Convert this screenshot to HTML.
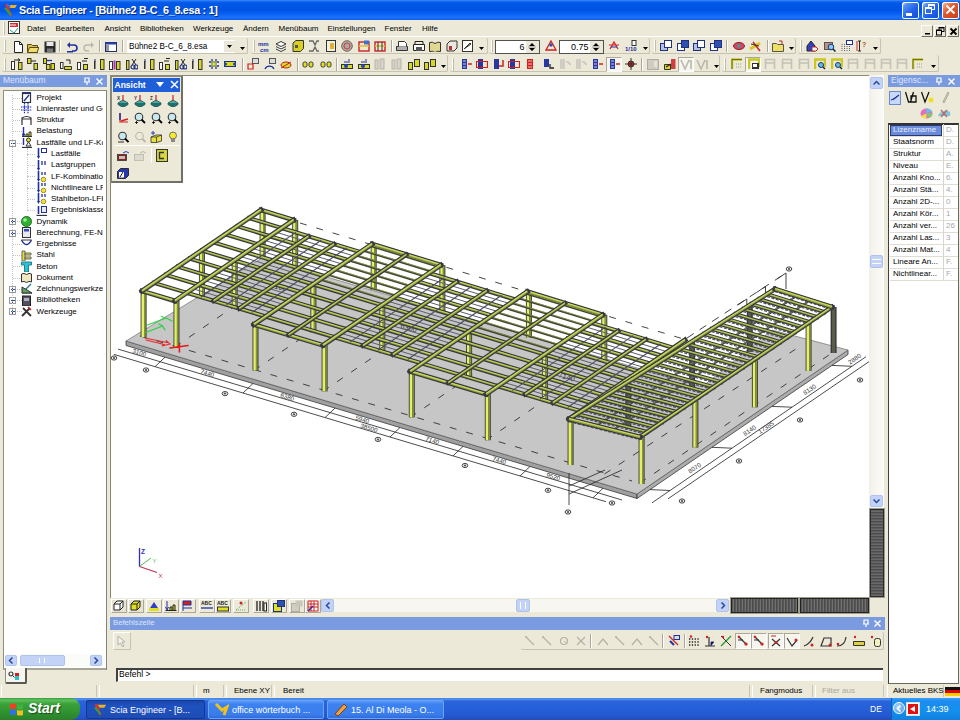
<!DOCTYPE html>
<html><head><meta charset="utf-8">
<style>
*{margin:0;padding:0;box-sizing:border-box}
html,body{width:960px;height:720px;overflow:hidden;background:#ECE9D8;font-family:"Liberation Sans",sans-serif;color:#000;position:relative}
.a{position:absolute}
.t{white-space:nowrap;line-height:1}
</style></head><body>
<div class="a" style="left:0px;top:0px;width:960px;height:20px;background:linear-gradient(#3A8DF9 0,#1868F2 1.5px,#0058E6 3px,#0054E3 10px,#0862F5 14px,#1A70F8 17px,#166AF4 19px,#0C58E0 20px)"></div>
<svg class="a" style="left:4px;top:3px" width="14" height="14" viewBox="0 0 14 14"><path d="M2,1l5,12" stroke="#E83020" stroke-width="2.5"/><path d="M4,2h9l-2,3h-5" fill="#F0B020"/><path d="M1,5l6,7" stroke="#30A040" stroke-width="2"/><path d="M3,1l3,3" stroke="#3070F0" stroke-width="2"/></svg>
<div class="a t" style="left:19px;top:4.5px;color:#fff;font-weight:bold;font-size:10.8px;letter-spacing:-0.3px;text-shadow:1px 1px 0 #0A2880">Scia Engineer - [Bühne2 B-C_6_8.esa : 1]</div>
<div class="a" style="left:902px;top:2px;width:17px;height:17px;background:linear-gradient(135deg,#C8DCFF 0,#5090F8 15%,#2060E8 60%,#1850D0 100%);border:1px solid #fff;border-radius:2px"></div>
<div class="a" style="left:906px;top:13px;width:6px;height:2.5px;background:#fff"></div>
<div class="a" style="left:922px;top:2px;width:17px;height:17px;background:linear-gradient(135deg,#C8DCFF 0,#5090F8 15%,#2060E8 60%,#1850D0 100%);border:1px solid #fff;border-radius:2px"></div>
<div class="a" style="left:928px;top:4px;width:7px;height:6px;border:1px solid #fff;border-top-width:2px"></div>
<div class="a" style="left:925px;top:7px;width:7px;height:7px;border:1px solid #fff;border-top-width:2px;background:#2E6AEE"></div>
<div class="a" style="left:942px;top:2px;width:17px;height:17px;background:linear-gradient(135deg,#FFF 0,#F0A080 8%,#E05830 40%,#C84018 100%);border:1px solid #fff;border-radius:2px"></div>
<svg class="a" style="left:945px;top:4px" width="11" height="11" viewBox="0 0 11 11"><path d="M1.5,1.5l8,8M9.5,1.5l-8,8" stroke="#fff" stroke-width="2"/></svg>
<div class="a" style="left:0px;top:20px;width:960px;height:17px;background:#ECE9D8;border-bottom:1px solid #fff"></div>
<div class="a" style="left:3px;top:22px;width:2px;height:13px;border-left:1px solid #fff;border-right:1px solid #C0BDA8;"></div>
<svg class="a" style="left:8px;top:21px" width="12" height="13" viewBox="0 0 12 13"><rect x="0.5" y="0.5" width="11" height="12" fill="#fff" stroke="#333"/><path d="M2,2h8v4h-8z" fill="#D03030"/><path d="M3,3v2M5,3v2M7,3v2" stroke="#fff"/><path d="M2,9l4,3l4-5" stroke="#20A080" fill="none"/></svg>
<div class="a t" style="left:27px;top:25px;font-size:8px;color:#000">Datei</div>
<div class="a t" style="left:55.5px;top:25px;font-size:8px;color:#000">Bearbeiten</div>
<div class="a t" style="left:104.5px;top:25px;font-size:8px;color:#000">Ansicht</div>
<div class="a t" style="left:140px;top:25px;font-size:8px;color:#000">Bibliotheken</div>
<div class="a t" style="left:193px;top:25px;font-size:8px;color:#000">Werkzeuge</div>
<div class="a t" style="left:243px;top:25px;font-size:8px;color:#000">Ändern</div>
<div class="a t" style="left:278.5px;top:25px;font-size:8px;color:#000">Menübaum</div>
<div class="a t" style="left:327.5px;top:25px;font-size:8px;color:#000">Einstellungen</div>
<div class="a t" style="left:384.5px;top:25px;font-size:8px;color:#000">Fenster</div>
<div class="a t" style="left:422px;top:25px;font-size:8px;color:#000">Hilfe</div>
<div class="a" style="left:921px;top:25px;width:12px;height:12px;background:#ECE9D8;border:1px solid;border-color:#fff #716F64 #716F64 #fff"></div>
<div class="a" style="left:934px;top:25px;width:12px;height:12px;background:#ECE9D8;border:1px solid;border-color:#fff #716F64 #716F64 #fff"></div>
<div class="a" style="left:947px;top:25px;width:12px;height:12px;background:#ECE9D8;border:1px solid;border-color:#fff #716F64 #716F64 #fff"></div>
<svg class="a" style="left:924px;top:27px" width="8" height="8" viewBox="0 0 8 8"><rect x="1" y="6" width="5" height="1.5" fill="#000"/></svg>
<svg class="a" style="left:936px;top:27px" width="9" height="9" viewBox="0 0 9 9"><rect x="3" y="0.5" width="5" height="4" fill="none" stroke="#000"/><rect x="0.5" y="3" width="5" height="5" fill="#ECE9D8" stroke="#000"/><path d="M0.5,3.5h5M3,1h5" stroke="#000" stroke-width="1.2"/></svg>
<svg class="a" style="left:949px;top:27px" width="9" height="9" viewBox="0 0 9 9"><path d="M1.5,1.5l6,6M7.5,1.5l-6,6" stroke="#000" stroke-width="1.8"/></svg>
<div class="a" style="left:0px;top:37px;width:960px;height:36px;background:#ECE9D8"></div>
<div class="a" style="left:2px;top:38px;width:246px;height:16px;background:#ECE9D8;border-bottom:1px solid #C6C3B0;border-right:1px solid #C6C3B0;border-radius:2px"></div>
<div class="a" style="left:4px;top:40px;width:2px;height:12px;border-left:1px solid #fff;border-right:1px solid #C0BDA8;"></div>
<svg class="a" style="left:11.5px;top:41px" width="12.0" height="12.0" viewBox="0 0 12 12"><path d="M2.5,0.5h5l3,3v8h-8z" fill="#fff" stroke="#222"/><path d="M7.5,0.5v3h3" fill="none" stroke="#222"/></svg>
<svg class="a" style="left:27px;top:41px" width="12.0" height="12.0" viewBox="0 0 12 12"><path d="M0.5,3.5h4l1,1h5v7h-10z" fill="#D8C050" stroke="#5A4A10"/><path d="M0.5,11.5l2-5h9.5l-2,5z" fill="#F0DC70" stroke="#5A4A10"/></svg>
<svg class="a" style="left:43.5px;top:41px" width="12.0" height="12.0" viewBox="0 0 12 12"><rect x="0.5" y="0.5" width="11" height="11" fill="#2A2A2A"/><rect x="2.5" y="1" width="7" height="4" fill="#E8E8E8"/><rect x="3" y="7.5" width="6" height="4" fill="#7A7A7A"/></svg>
<svg class="a" style="left:66px;top:41px" width="12.0" height="12.0" viewBox="0 0 12 12"><path d="M3,4 h5 a3,3 0 0 1 0,6 h-2" fill="none" stroke="#2030A0" stroke-width="1.6"/><path d="M1,4l3-3v6z" fill="#2030A0"/><rect x="1" y="10" width="6" height="1.5" fill="#2030A0"/></svg>
<svg class="a" style="left:83px;top:41px" width="12.0" height="12.0" viewBox="0 0 12 12"><path d="M9,4 h-5 a3,3 0 0 0 0,6 h2" fill="none" stroke="#B8B8B0" stroke-width="1.4"/><path d="M11,4l-3-3v6z" fill="#B8B8B0"/></svg>
<svg class="a" style="left:105px;top:41px" width="12.0" height="12.0" viewBox="0 0 12 12"><rect x="0.5" y="1.5" width="11" height="9" fill="#fff" stroke="#223070"/><rect x="0.5" y="1.5" width="11" height="2" fill="#2040B0"/><rect x="1" y="4" width="3" height="6" fill="#9098A8"/></svg>
<div class="a" style="left:59px;top:40px;width:2px;height:12px;border-left:1px solid #ACA899;border-right:1px solid #fff;"></div>
<div class="a" style="left:99px;top:40px;width:2px;height:12px;border-left:1px solid #ACA899;border-right:1px solid #fff;"></div>
<div class="a" style="left:121.5px;top:40px;width:2px;height:12px;border-left:1px solid #ACA899;border-right:1px solid #fff;"></div>
<div class="a" style="left:127px;top:40px;width:108px;height:13px;background:#fff;border:1px solid #fff"></div>
<div class="a t" style="left:129px;top:43px;font-size:8.2px">Bühne2 B-C_6_8.esa</div>
<div class="a" style="left:224px;top:41px;width:11px;height:11px;background:#ECE9D8;border:1px solid #E8E6DC"></div>
<svg class="a" style="left:227px;top:45px" width="5" height="3" viewBox="0 0 5 3"><path d="M0,0h5l-2.5,3z" fill="#000"/></svg>
<svg class="a" style="left:240px;top:47px" width="5" height="3" viewBox="0 0 5 3"><path d="M0,0h5l-2.5,3z" fill="#000"/></svg>
<div class="a" style="left:251px;top:38px;width:237px;height:16px;background:#ECE9D8;border-bottom:1px solid #C6C3B0;border-right:1px solid #C6C3B0;border-radius:2px"></div>
<div class="a" style="left:253px;top:40px;width:2px;height:12px;border-left:1px solid #fff;border-right:1px solid #C0BDA8;"></div>
<svg class="a" style="left:257.5px;top:40px" width="12.0" height="12.0" viewBox="0 0 12 12"><text x="0" y="5.5" font-size="6" font-weight="bold" fill="#2030A0" font-family="Liberation Sans">mm</text><text x="2" y="11.5" font-size="6" font-weight="bold" fill="#2030A0" font-family="Liberation Sans">cm</text></svg>
<svg class="a" style="left:275px;top:40px" width="12.0" height="12.0" viewBox="0 0 12 12"><path d="M1,4l5-2.5l5,2.5l-5,2.5z M1,6.5l5,2.5l5-2.5 M1,9l5,2.5l5-2.5" fill="#fff" stroke="#333"/></svg>
<svg class="a" style="left:291.5px;top:40px" width="12.0" height="12.0" viewBox="0 0 12 12"><path d="M1,3l3-2.5h7.5v8l-3,3h-7.5z" fill="#D8D020" stroke="#333"/><path d="M3,5h3v3h-3z" fill="#555"/></svg>
<svg class="a" style="left:308px;top:40px" width="12.0" height="12.0" viewBox="0 0 12 12"><path d="M1,1h4l2,4l2-4h2M1,11h4l2-4l2,4h2" fill="none" stroke="#666" stroke-width="1.3"/></svg>
<svg class="a" style="left:324.5px;top:40px" width="12.0" height="12.0" viewBox="0 0 12 12"><rect x="1.5" y="0.5" width="9" height="11" fill="#F0F0E0" stroke="#333"/><rect x="5" y="3" width="4" height="6" fill="#E0B030"/></svg>
<svg class="a" style="left:341px;top:40px" width="12.0" height="12.0" viewBox="0 0 12 12"><circle cx="6" cy="6" r="5.3" fill="#B0A8A0" stroke="#706860"/><circle cx="6" cy="6" r="3" fill="none" stroke="#D04040"/></svg>
<svg class="a" style="left:357.5px;top:40px" width="12.0" height="12.0" viewBox="0 0 12 12"><rect x="1" y="2" width="10" height="9" fill="none" stroke="#D02020" stroke-width="1.4"/><rect x="6" y="0.5" width="5" height="4" fill="#4070D0"/><path d="M1,6h10" stroke="#E0C020" stroke-width="1.5"/></svg>
<svg class="a" style="left:374px;top:40px" width="12.0" height="12.0" viewBox="0 0 12 12"><rect x="1" y="2" width="10" height="9" fill="none" stroke="#D02020" stroke-width="1.4"/><path d="M1,6h10" stroke="#E0C020" stroke-width="1.5"/><path d="M4,2v9M8,2v9" stroke="#333"/></svg>
<svg class="a" style="left:396px;top:40px" width="12.0" height="12.0" viewBox="0 0 12 12"><path d="M0.5,6.5h11v4h-11z" fill="#B0B0B0" stroke="#333"/><path d="M2.5,6.5v-5h6l2,2v3" fill="#fff" stroke="#333"/></svg>
<svg class="a" style="left:412.5px;top:40px" width="12.0" height="12.0" viewBox="0 0 12 12"><path d="M0.5,4.5h11v6h-11z" fill="#fff" stroke="#222"/><path d="M2,4.5v-3h8v3" fill="none" stroke="#222"/><rect x="3" y="7" width="6" height="4" fill="#555"/></svg>
<svg class="a" style="left:429px;top:40px" width="12.0" height="12.0" viewBox="0 0 12 12"><path d="M0.5,2.5q3-1 5.5,1q2.5-2 5.5-1v9q-3-1-5.5,1q-2.5-2-5.5-1z" fill="#E0D890" stroke="#333"/></svg>
<svg class="a" style="left:446px;top:40px" width="12.0" height="12.0" viewBox="0 0 12 12"><path d="M1,4l3-3h7v7l-3,3h-7z" fill="#E8E8E0" stroke="#333"/><rect x="3" y="6" width="3" height="4" fill="#C03030"/></svg>
<svg class="a" style="left:462px;top:40px" width="12.0" height="12.0" viewBox="0 0 12 12"><rect x="0.5" y="0.5" width="10" height="11" fill="#fff" stroke="#333"/><path d="M2,9l6-6l1,1z" fill="#D8D020" stroke="#333"/></svg>
<div class="a" style="left:391px;top:40px;width:2px;height:12px;border-left:1px solid #ACA899;border-right:1px solid #fff;"></div>
<svg class="a" style="left:479px;top:47px" width="5" height="3" viewBox="0 0 5 3"><path d="M0,0h5l-2.5,3z" fill="#000"/></svg>
<div class="a" style="left:489px;top:38px;width:161px;height:16px;background:#ECE9D8;border-bottom:1px solid #C6C3B0;border-right:1px solid #C6C3B0;border-radius:2px"></div>
<div class="a" style="left:491px;top:40px;width:2px;height:12px;border-left:1px solid #fff;border-right:1px solid #C0BDA8;"></div>
<div class="a" style="left:495px;top:40px;width:45px;height:14px;background:#fff;border:1.5px solid #505050"></div>
<div class="a t" style="left:519.5px;top:42.5px;font-size:9px">6</div>
<div class="a" style="left:526px;top:41px;width:13px;height:12px;background:#ECE9D8"></div>
<svg class="a" style="left:528px;top:42px" width="10" height="10" viewBox="0 0 10 10"><path d="M1,4l3-3l3,3zM1,6l3,3l3-3z" fill="#000"/><path d="M0,5h8" stroke="#999"/></svg>
<svg class="a" style="left:545px;top:40px" width="12.0" height="12.0" viewBox="0 0 12 12"><path d="M6,1l5,9h-10z" fill="none" stroke="#D02020" stroke-width="1.3"/><circle cx="6" cy="5" r="1.8" fill="#3050C0"/></svg>
<div class="a" style="left:559px;top:40px;width:45px;height:14px;background:#fff;border:1.5px solid #505050"></div>
<div class="a t" style="left:571px;top:42.5px;font-size:9px">0.75</div>
<div class="a" style="left:590px;top:41px;width:13px;height:12px;background:#ECE9D8"></div>
<svg class="a" style="left:592px;top:42px" width="10" height="10" viewBox="0 0 10 10"><path d="M1,4l3-3l3,3zM1,6l3,3l3-3z" fill="#000"/><path d="M0,5h8" stroke="#999"/></svg>
<svg class="a" style="left:608px;top:40px" width="12.0" height="12.0" viewBox="0 0 12 12"><path d="M1,5h10M2,9l4-7l4,7" fill="none" stroke="#D02020" stroke-width="1.2"/><path d="M3,7h6" stroke="#2030A0"/></svg>
<svg class="a" style="left:625px;top:40px" width="12.0" height="12.0" viewBox="0 0 12 12"><text x="0" y="11" font-size="6" font-weight="bold" fill="#2030A0" font-family="Liberation Sans">1/10</text><rect x="7" y="0.5" width="4" height="5" fill="#fff" stroke="#333"/></svg>
<svg class="a" style="left:643px;top:47px" width="5" height="3" viewBox="0 0 5 3"><path d="M0,0h5l-2.5,3z" fill="#000"/></svg>
<div class="a" style="left:652px;top:38px;width:144px;height:16px;background:#ECE9D8;border-bottom:1px solid #C6C3B0;border-right:1px solid #C6C3B0;border-radius:2px"></div>
<div class="a" style="left:654px;top:40px;width:2px;height:12px;border-left:1px solid #fff;border-right:1px solid #C0BDA8;"></div>
<svg class="a" style="left:660px;top:40px" width="12.0" height="12.0" viewBox="0 0 12 12"><rect x="0.5" y="3.5" width="7" height="7" fill="#B8C0E0" stroke="#203080"/><rect x="4.5" y="0.5" width="7" height="7" fill="#fff" stroke="#203080"/></svg>
<svg class="a" style="left:677px;top:40px" width="12.0" height="12.0" viewBox="0 0 12 12"><rect x="0.5" y="3.5" width="7" height="7" fill="#fff" stroke="#203080"/><rect x="4.5" y="0.5" width="7" height="7" fill="#3050B0" stroke="#203080"/></svg>
<svg class="a" style="left:693px;top:40px" width="12.0" height="12.0" viewBox="0 0 12 12"><rect x="0.5" y="3.5" width="7" height="7" fill="#B8C0E0" stroke="#203080"/><rect x="4.5" y="0.5" width="7" height="7" fill="#fff" stroke="#203080"/></svg>
<svg class="a" style="left:710px;top:40px" width="12.0" height="12.0" viewBox="0 0 12 12"><rect x="0.5" y="3.5" width="7" height="7" fill="#fff" stroke="#203080"/><rect x="4.5" y="0.5" width="7" height="7" fill="#3050B0" stroke="#203080"/></svg>
<svg class="a" style="left:732.5px;top:40px" width="12.0" height="12.0" viewBox="0 0 12 12"><ellipse cx="6" cy="6" rx="5.5" ry="3.5" fill="#E04060" stroke="#802030"/><circle cx="6" cy="6" r="1.8" fill="#30A0A0"/></svg>
<svg class="a" style="left:749px;top:40px" width="12.0" height="12.0" viewBox="0 0 12 12"><path d="M1,9l10-6" stroke="#D8C820" stroke-width="3"/><path d="M4,2l7,9" stroke="#D02020" stroke-width="1.5"/><path d="M2,4l8,2" stroke="#333"/></svg>
<svg class="a" style="left:772px;top:40px" width="12.0" height="12.0" viewBox="0 0 12 12"><path d="M0.5,3.5h4l1,1h6v7h-11z" fill="#F0E060" stroke="#555"/><path d="M7,1h3v3" stroke="#D02020" fill="none"/></svg>
<div class="a" style="left:726px;top:40px;width:2px;height:12px;border-left:1px solid #ACA899;border-right:1px solid #fff;"></div>
<div class="a" style="left:766.5px;top:40px;width:2px;height:12px;border-left:1px solid #ACA899;border-right:1px solid #fff;"></div>
<svg class="a" style="left:789px;top:47px" width="5" height="3" viewBox="0 0 5 3"><path d="M0,0h5l-2.5,3z" fill="#000"/></svg>
<div class="a" style="left:798px;top:38px;width:83px;height:16px;background:#ECE9D8;border-bottom:1px solid #C6C3B0;border-right:1px solid #C6C3B0;border-radius:2px"></div>
<div class="a" style="left:800px;top:40px;width:2px;height:12px;border-left:1px solid #fff;border-right:1px solid #C0BDA8;"></div>
<svg class="a" style="left:806px;top:40px" width="12.0" height="12.0" viewBox="0 0 12 12"><path d="M1,6l4-5l4,5v5h-8z" fill="#3040C0" stroke="#222"/><path d="M6,7h4l2,2l-2,2h-4z" fill="#fff" stroke="#D02020"/></svg>
<svg class="a" style="left:823.5px;top:40px" width="12.0" height="12.0" viewBox="0 0 12 12"><rect x="0.5" y="2.5" width="8" height="7" fill="#C09080" stroke="#555"/><circle cx="7" cy="7" r="2.8" fill="#80D0F0" stroke="#203080"/><path d="M9,9l2.5,2.5" stroke="#222" stroke-width="1.5"/></svg>
<svg class="a" style="left:840.5px;top:40px" width="12.0" height="12.0" viewBox="0 0 12 12"><path d="M1,4v8M3.5,4v8M6,4v8M8.5,4v8" stroke="#666" stroke-dasharray="1,1"/><rect x="5.5" y="0.5" width="6" height="4" fill="#fff" stroke="#2030A0"/></svg>
<svg class="a" style="left:856px;top:40px" width="12.0" height="12.0" viewBox="0 0 12 12"><path d="M2,1h3M3.5,1v10M2,11h3" stroke="#222"/><path d="M1,1v10" stroke="#D02020"/><text x="6" y="7" font-size="7" font-weight="bold" fill="#A06020" font-family="Liberation Sans">?</text></svg>
<svg class="a" style="left:873px;top:47px" width="5" height="3" viewBox="0 0 5 3"><path d="M0,0h5l-2.5,3z" fill="#000"/></svg>
<div class="a" style="left:2px;top:55px;width:446px;height:16.5px;background:#ECE9D8;border-bottom:1px solid #C6C3B0;border-right:1px solid #C6C3B0;border-radius:2px"></div>
<div class="a" style="left:4px;top:58px;width:2px;height:13px;border-left:1px solid #fff;border-right:1px solid #C0BDA8;"></div>
<svg class="a" style="left:10.8px;top:57.8px" width="12.0" height="12.0" viewBox="0 0 12 12"><rect x="0.5" y="3.5" width="3" height="8" fill="#fff" stroke="#333"/><rect x="7.5" y="4.5" width="3.5" height="7" fill="#D8D820" stroke="#333"/><path d="M3,2h6l-2,-1.5M9,2l-2,1.5" stroke="#222" fill="none"/></svg>
<svg class="a" style="left:26.5px;top:57.8px" width="12.0" height="12.0" viewBox="0 0 12 12"><rect x="0.5" y="0.5" width="3.5" height="5" fill="#D8D820" stroke="#333"/><rect x="7" y="5.5" width="3.5" height="6" fill="#D8D820" stroke="#333"/><path d="M4,3h5" stroke="#222"/></svg>
<svg class="a" style="left:43px;top:57.8px" width="12.0" height="12.0" viewBox="0 0 12 12"><rect x="0.5" y="0.5" width="3" height="5" fill="#D8D820" stroke="#333"/><rect x="3.5" y="6.5" width="3.5" height="5" fill="#D8D820" stroke="#333"/><rect x="8" y="5.5" width="3.5" height="6" fill="#D8D820" stroke="#333"/><path d="M4,2.5h5" stroke="#2030A0" stroke-width="1.3"/></svg>
<svg class="a" style="left:59.5px;top:57.8px" width="12.0" height="12.0" viewBox="0 0 12 12"><rect x="0.5" y="4.5" width="2.5" height="6" fill="#fff" stroke="#333"/><path d="M4.5,8.5h7v3h-7z" fill="#D8D820" stroke="#333"/><path d="M6,2h4v4" stroke="#222" fill="none"/></svg>
<svg class="a" style="left:77px;top:57.8px" width="12.0" height="12.0" viewBox="0 0 12 12"><rect x="0.5" y="4.5" width="3" height="7" fill="#fff" stroke="#333"/><rect x="6.5" y="6.5" width="4" height="5" fill="#D8D820" stroke="#333"/><path d="M7,0.5h4M5,3h5" stroke="#222"/></svg>
<svg class="a" style="left:92.5px;top:57.8px" width="12.0" height="12.0" viewBox="0 0 12 12"><rect x="1" y="3" width="1.5" height="8" fill="#333"/><rect x="7.5" y="1.5" width="3.5" height="10" fill="#D8D820" stroke="#333"/><path d="M2,1v3" stroke="#203080"/></svg>
<svg class="a" style="left:109px;top:57.8px" width="12.0" height="12.0" viewBox="0 0 12 12"><rect x="0.5" y="3.5" width="3" height="8" fill="#fff" stroke="#333"/><rect x="4.5" y="2.5" width="2" height="9" fill="#B030B0"/><rect x="7.5" y="3.5" width="3.5" height="8" fill="#D8D820" stroke="#333"/></svg>
<svg class="a" style="left:126px;top:57.8px" width="12.0" height="12.0" viewBox="0 0 12 12"><rect x="0.5" y="2.5" width="2.5" height="9" fill="#D8D820" stroke="#333"/><circle cx="7" cy="9" r="2" fill="none" stroke="#203080" stroke-width="1.2"/><circle cx="10" cy="9" r="2" fill="none" stroke="#203080" stroke-width="1.2"/><path d="M6,1l4,6M10,1l-4,6" stroke="#222"/></svg>
<svg class="a" style="left:142.5px;top:57.8px" width="12.0" height="12.0" viewBox="0 0 12 12"><rect x="1" y="3" width="1.5" height="8" fill="#333"/><rect x="7.5" y="1.5" width="3.5" height="10" fill="#D8D820" stroke="#333"/><path d="M2,1v3" stroke="#203080"/></svg>
<svg class="a" style="left:158.5px;top:57.8px" width="12.0" height="12.0" viewBox="0 0 12 12"><rect x="0.5" y="4.5" width="3" height="7" fill="#fff" stroke="#333"/><rect x="6.5" y="6.5" width="4" height="5" fill="#D8D820" stroke="#333"/><path d="M7,0.5h4M5,3h5" stroke="#222"/></svg>
<svg class="a" style="left:175px;top:57.8px" width="12.0" height="12.0" viewBox="0 0 12 12"><rect x="0.5" y="2.5" width="2.5" height="9" fill="#D8D820" stroke="#333"/><circle cx="7" cy="9" r="2" fill="none" stroke="#203080" stroke-width="1.2"/><circle cx="10" cy="9" r="2" fill="none" stroke="#203080" stroke-width="1.2"/><path d="M6,1l4,6M10,1l-4,6" stroke="#222"/></svg>
<svg class="a" style="left:191px;top:57.8px" width="12.0" height="12.0" viewBox="0 0 12 12"><rect x="1" y="3" width="1.5" height="8" fill="#333"/><rect x="7.5" y="1.5" width="3.5" height="10" fill="#D8D820" stroke="#333"/><path d="M2,1v3" stroke="#203080"/></svg>
<svg class="a" style="left:208px;top:57.8px" width="12.0" height="12.0" viewBox="0 0 12 12"><path d="M1,4h10M1,8h10M4,1v10M8,1v10" stroke="#2030A0" stroke-width="1.3"/><rect x="3" y="3" width="6" height="6" fill="#D8D820" opacity="0.6"/></svg>
<svg class="a" style="left:224px;top:57.8px" width="12.0" height="12.0" viewBox="0 0 12 12"><rect x="0.5" y="3.5" width="11" height="5" fill="#D8D820" stroke="#203080"/><circle cx="1.5" cy="6" r="1.5" fill="#2040C0"/><circle cx="10.5" cy="6" r="1.5" fill="#2040C0"/></svg>
<svg class="a" style="left:247px;top:57.8px" width="12.0" height="12.0" viewBox="0 0 12 12"><rect x="5.5" y="0.5" width="6" height="5" fill="#ddd" stroke="#555"/><path d="M1,6h5v5h-5z" fill="none" stroke="#D02020" stroke-width="1.2"/></svg>
<svg class="a" style="left:263.5px;top:57.8px" width="12.0" height="12.0" viewBox="0 0 12 12"><rect x="5.5" y="0.5" width="6" height="5" fill="#ddd" stroke="#555"/><path d="M1,11a5,5 0 0 1 9,0" fill="none" stroke="#2030A0" stroke-width="1.3"/></svg>
<svg class="a" style="left:280px;top:57.8px" width="12.0" height="12.0" viewBox="0 0 12 12"><ellipse cx="6" cy="7" rx="5" ry="3" fill="#D8D820" stroke="#C02020"/><path d="M1,10l10-6" stroke="#C02020"/></svg>
<svg class="a" style="left:302px;top:57.8px" width="12.0" height="12.0" viewBox="0 0 12 12"><rect x="1" y="4" width="4" height="5" rx="1.5" fill="#E0E020" stroke="#333"/><rect x="7" y="4" width="4" height="5" rx="1.5" fill="#E0E020" stroke="#333"/></svg>
<svg class="a" style="left:319.5px;top:57.8px" width="12.0" height="12.0" viewBox="0 0 12 12"><rect x="1" y="4" width="4" height="5" rx="1.5" fill="#E0E020" stroke="#333"/><rect x="7" y="4" width="4" height="5" rx="1.5" fill="#E0E020" stroke="#333"/></svg>
<svg class="a" style="left:341px;top:57.8px" width="12.0" height="12.0" viewBox="0 0 12 12"><rect x="0.5" y="6.5" width="11" height="4" fill="#D8D820" stroke="#333"/><circle cx="5" cy="8" r="2" fill="#2040C0"/><path d="M3,4h4M8,1v4" stroke="#2030A0"/></svg>
<svg class="a" style="left:357.5px;top:57.8px" width="12.0" height="12.0" viewBox="0 0 12 12"><rect x="0.5" y="6.5" width="11" height="4" fill="#D8D820" stroke="#333"/><circle cx="5" cy="8" r="2" fill="#2040C0"/><path d="M3,4h4M8,1v4" stroke="#2030A0"/></svg>
<svg class="a" style="left:374px;top:57.8px" width="12.0" height="12.0" viewBox="0 0 12 12"><rect x="1" y="2" width="3" height="9" fill="#D6D4C8" stroke="#B8B6AA"/><rect x="6" y="1" width="4" height="10" fill="#D6D4C8" stroke="#B8B6AA"/></svg>
<svg class="a" style="left:391px;top:57.8px" width="12.0" height="12.0" viewBox="0 0 12 12"><rect x="1" y="2" width="3" height="9" fill="#D6D4C8" stroke="#B8B6AA"/><rect x="6" y="1" width="4" height="10" fill="#D6D4C8" stroke="#B8B6AA"/></svg>
<svg class="a" style="left:407.5px;top:57.8px" width="12.0" height="12.0" viewBox="0 0 12 12"><rect x="0.5" y="4.5" width="4" height="7" fill="#D8D820" stroke="#333"/><rect x="6.5" y="1.5" width="5" height="7" fill="#D8D820" stroke="#333"/></svg>
<svg class="a" style="left:424px;top:57.8px" width="12.0" height="12.0" viewBox="0 0 12 12"><rect x="0.5" y="4.5" width="4" height="7" fill="#D8D820" stroke="#333"/><rect x="6.5" y="1.5" width="5" height="7" fill="#D8D820" stroke="#333"/></svg>
<div class="a" style="left:241.5px;top:58px;width:2px;height:13px;border-left:1px solid #ACA899;border-right:1px solid #fff;"></div>
<div class="a" style="left:296.5px;top:58px;width:2px;height:13px;border-left:1px solid #ACA899;border-right:1px solid #fff;"></div>
<div class="a" style="left:335.5px;top:58px;width:2px;height:13px;border-left:1px solid #ACA899;border-right:1px solid #fff;"></div>
<svg class="a" style="left:441px;top:65px" width="5" height="3" viewBox="0 0 5 3"><path d="M0,0h5l-2.5,3z" fill="#000"/></svg>
<div class="a" style="left:450px;top:55px;width:270px;height:16.5px;background:#ECE9D8;border-bottom:1px solid #C6C3B0;border-right:1px solid #C6C3B0;border-radius:2px"></div>
<div class="a" style="left:452px;top:58px;width:2px;height:13px;border-left:1px solid #fff;border-right:1px solid #C0BDA8;"></div>
<div class="a" style="left:606px;top:57px;width:16px;height:15px;background:#F6F5EE;border:1px solid;border-color:#ACA899 #fff #fff #ACA899"></div>
<div class="a" style="left:678px;top:57px;width:16px;height:15px;background:#F6F5EE;border:1px solid;border-color:#ACA899 #fff #fff #ACA899"></div>
<svg class="a" style="left:461px;top:57.8px" width="12.0" height="12.0" viewBox="0 0 12 12"><path d="M1,1h5v10h-5z" fill="#2838A0"/><path d="M2,3h3M2,6h3M2,9h3" stroke="#D0D0F0"/><path d="M7,6h4" stroke="#D02020" stroke-width="1.5"/></svg>
<svg class="a" style="left:476px;top:57.8px" width="12.0" height="12.0" viewBox="0 0 12 12"><path d="M2,1h5v10h-5z" fill="#2838A0"/><path d="M0.5,3.5h11v6h-11z" fill="none" stroke="#D02020" stroke-width="1.2"/></svg>
<svg class="a" style="left:492.5px;top:57.8px" width="12.0" height="12.0" viewBox="0 0 12 12"><path d="M1,1h5v10h-5z" fill="#2838A0"/><path d="M6,8h4v-6" fill="none" stroke="#D02020" stroke-width="1.5"/></svg>
<svg class="a" style="left:508px;top:57.8px" width="12.0" height="12.0" viewBox="0 0 12 12"><path d="M2,1h5v10h-5z" fill="#2838A0"/><path d="M0.5,3.5h11v6h-11z" fill="none" stroke="#D02020" stroke-width="1.2"/></svg>
<svg class="a" style="left:524px;top:57.8px" width="12.0" height="12.0" viewBox="0 0 12 12"><path d="M3,1h6v10h-6z" fill="#D02020"/><path d="M4,3h4M4,6h4M4,9h4" stroke="#F0C0C0"/></svg>
<svg class="a" style="left:542.5px;top:57.8px" width="12.0" height="12.0" viewBox="0 0 12 12"><path d="M1,1h5v8h-5z" fill="#2838A0"/><path d="M7,6v4h4" fill="none" stroke="#222" stroke-width="1.3"/></svg>
<svg class="a" style="left:558.5px;top:57.8px" width="12.0" height="12.0" viewBox="0 0 12 12"><path d="M1,1h5v10h-5z" fill="#D0CEC2"/><path d="M7,4a3,3 0 0 1 4,3" fill="none" stroke="#C0BEB2" stroke-width="1.3"/></svg>
<svg class="a" style="left:575px;top:57.8px" width="12.0" height="12.0" viewBox="0 0 12 12"><path d="M1,1h5v10h-5z" fill="#D0CEC2"/><path d="M7,4a3,3 0 0 1 4,3" fill="none" stroke="#C0BEB2" stroke-width="1.3"/></svg>
<svg class="a" style="left:592px;top:57.8px" width="12.0" height="12.0" viewBox="0 0 12 12"><path d="M1,1h5v10h-5z" fill="#2838A0"/><path d="M2,3h3M2,6h3M2,9h3" stroke="#D0D0F0"/><path d="M7,6h4" stroke="#D02020" stroke-width="1.5"/></svg>
<svg class="a" style="left:609px;top:57.8px" width="12.0" height="12.0" viewBox="0 0 12 12"><path d="M1,1h5v10h-5z" fill="#2838A0"/><path d="M2,3h3M2,6h3M2,9h3" stroke="#D0D0F0"/><path d="M7,6h4" stroke="#D02020" stroke-width="1.5"/></svg>
<svg class="a" style="left:625px;top:57.8px" width="12.0" height="12.0" viewBox="0 0 12 12"><circle cx="6" cy="6" r="3" fill="#D02020" stroke="#333"/><path d="M6,0v12M0,6h12" stroke="#333"/></svg>
<svg class="a" style="left:647px;top:57.8px" width="12.0" height="12.0" viewBox="0 0 12 12"><rect x="0.5" y="1.5" width="11" height="10" fill="#CFCDC2" stroke="#B0AEA2"/><rect x="7" y="3" width="3" height="6" fill="#E6E4DA"/></svg>
<svg class="a" style="left:663.5px;top:57.8px" width="12.0" height="12.0" viewBox="0 0 12 12"><path d="M0.5,6.5h6v5h-6z" fill="#D8D820" stroke="#333"/><rect x="7" y="1" width="4.5" height="10" fill="#D04040"/><path d="M2,9l5-3" stroke="#222" stroke-width="1.3"/></svg>
<svg class="a" style="left:680px;top:57.8px" width="12.0" height="12.0" viewBox="0 0 12 12"><path d="M1,2l4,9l4-9M9,3h2v8" fill="none" stroke="#BAB8AC" stroke-width="1.6"/></svg>
<svg class="a" style="left:696px;top:57.8px" width="12.0" height="12.0" viewBox="0 0 12 12"><path d="M1,2l4,9l4-9M9,3h2v8" fill="none" stroke="#BAB8AC" stroke-width="1.6"/></svg>
<div class="a" style="left:641px;top:58px;width:2px;height:13px;border-left:1px solid #ACA899;border-right:1px solid #fff;"></div>
<svg class="a" style="left:714px;top:65px" width="5" height="3" viewBox="0 0 5 3"><path d="M0,0h5l-2.5,3z" fill="#000"/></svg>
<div class="a" style="left:722px;top:55px;width:217px;height:16.5px;background:#ECE9D8;border-bottom:1px solid #C6C3B0;border-right:1px solid #C6C3B0;border-radius:2px"></div>
<div class="a" style="left:724px;top:58px;width:2px;height:13px;border-left:1px solid #fff;border-right:1px solid #C0BDA8;"></div>
<div class="a" style="left:745px;top:57px;width:16px;height:15px;background:#F6F5EE;border:1px solid;border-color:#ACA899 #fff #fff #ACA899"></div>
<svg class="a" style="left:731px;top:57.8px" width="12.0" height="12.0" viewBox="0 0 12 12"><path d="M1,11V1.5h10" fill="none" stroke="#C8C820" stroke-width="2.5"/><path d="M1,11V1.5h10" fill="none" stroke="#333" stroke-width="0.6"/><path d="M5,6h5M5,9h5" stroke="#999" stroke-dasharray="1,1"/></svg>
<svg class="a" style="left:747.5px;top:57.8px" width="12.0" height="12.0" viewBox="0 0 12 12"><path d="M1,11V1.5h10V9" fill="none" stroke="#C8C820" stroke-width="2.5"/><rect x="4" y="5" width="7" height="6" fill="#333"/><rect x="5" y="6" width="4" height="3" fill="#fff"/></svg>
<svg class="a" style="left:764px;top:57.8px" width="12.0" height="12.0" viewBox="0 0 12 12"><path d="M1.5,11V1.5h9V11M1.5,5h9" fill="none" stroke="#C4C2B6" stroke-width="1.6"/></svg>
<svg class="a" style="left:781px;top:57.8px" width="12.0" height="12.0" viewBox="0 0 12 12"><path d="M1.5,11V1.5h9V11M1.5,5h9" fill="none" stroke="#C4C2B6" stroke-width="1.6"/></svg>
<svg class="a" style="left:797.5px;top:57.8px" width="12.0" height="12.0" viewBox="0 0 12 12"><path d="M1.5,11V1.5h9V11M1.5,5h9" fill="none" stroke="#C4C2B6" stroke-width="1.6"/></svg>
<svg class="a" style="left:814px;top:57.8px" width="12.0" height="12.0" viewBox="0 0 12 12"><path d="M1,11V1.5h10V9" fill="none" stroke="#C8C820" stroke-width="2.5"/><circle cx="7" cy="7" r="2.5" fill="#60C0E0" stroke="#203080"/><path d="M9,9l2,2" stroke="#222" stroke-width="1.5"/></svg>
<svg class="a" style="left:831px;top:57.8px" width="12.0" height="12.0" viewBox="0 0 12 12"><path d="M1,11V1.5h10V9" fill="none" stroke="#C8C820" stroke-width="2.5"/><circle cx="7" cy="7" r="2.5" fill="#60C0E0" stroke="#203080"/><path d="M9,9l2,2" stroke="#222" stroke-width="1.5"/></svg>
<svg class="a" style="left:847px;top:57.8px" width="12.0" height="12.0" viewBox="0 0 12 12"><path d="M1.5,11V1.5h9V11M1.5,5h9" fill="none" stroke="#C4C2B6" stroke-width="1.6"/></svg>
<svg class="a" style="left:863.5px;top:57.8px" width="12.0" height="12.0" viewBox="0 0 12 12"><path d="M1.5,11V1.5h9V11M1.5,5h9" fill="none" stroke="#C4C2B6" stroke-width="1.6"/></svg>
<svg class="a" style="left:880px;top:57.8px" width="12.0" height="12.0" viewBox="0 0 12 12"><path d="M1.5,11V1.5h9V11M1.5,5h9" fill="none" stroke="#C4C2B6" stroke-width="1.6"/></svg>
<svg class="a" style="left:896px;top:57.8px" width="12.0" height="12.0" viewBox="0 0 12 12"><path d="M1.5,11V1.5h9V11M1.5,5h9" fill="none" stroke="#C4C2B6" stroke-width="1.6"/></svg>
<svg class="a" style="left:912px;top:57.8px" width="12.0" height="12.0" viewBox="0 0 12 12"><path d="M1,11V1.5h10" fill="none" stroke="#C8C820" stroke-width="2.5"/><path d="M1,11V1.5h10" fill="none" stroke="#333" stroke-width="0.6"/><path d="M5,6h5M5,9h5" stroke="#999" stroke-dasharray="1,1"/></svg>
<svg class="a" style="left:931px;top:65px" width="5" height="3" viewBox="0 0 5 3"><path d="M0,0h5l-2.5,3z" fill="#000"/></svg>
<div class="a" style="left:0px;top:75px;width:107px;height:12px;background:#7B9BE1"></div>
<div class="a t" style="left:3px;top:76px;font-size:8.5px;color:#DDE6FA">Menübaum</div>
<svg class="a" style="left:83px;top:77px" width="8" height="9" viewBox="0 0 8 9"><path d="M2,1h4v4h-4zM1,5h6M4,5v3" stroke="#fff" fill="none" stroke-width="1.2"/></svg>
<svg class="a" style="left:95px;top:77px" width="9" height="9" viewBox="0 0 9 9"><path d="M1.5,1.5l6,6M7.5,1.5l-6,6" stroke="#fff" stroke-width="1.4"/></svg>
<div class="a" style="left:3px;top:90px;width:104px;height:580px;background:#fff;border:1px solid #8E8E80;border-right:1px solid #858575;border-bottom:2px solid #A8A698"></div>
<div class="a" style="left:12.5px;top:97.5px;width:9px;height:1px;border-top:1px dotted #C4C4C4"></div>
<svg class="a" style="left:21px;top:92.0px" width="11" height="11" viewBox="0 0 11 11"><rect x="1.5" y="1.5" width="8" height="9" fill="#fff" stroke="#333" stroke-width="1.2"/><path d="M3,9l5-6" stroke="#2030A0" stroke-width="1.3"/><path d="M1,0.5h9" stroke="#2030A0"/></svg>
<div class="a t" style="left:36.5px;top:93.7px;font-size:8px;color:#000">Projekt</div>
<div class="a" style="left:12.5px;top:108.76px;width:9px;height:1px;border-top:1px dotted #C4C4C4"></div>
<svg class="a" style="left:21px;top:103.26px" width="11" height="11" viewBox="0 0 11 11"><path d="M0,4h11M0,7h11M3.5,0v11M7,0v11" stroke="#2030C0" stroke-width="1.2" stroke-dasharray="1.5,0.7"/></svg>
<div class="a t" style="left:36.5px;top:104.96000000000001px;font-size:8px;color:#000">Linienraster und Ge</div>
<div class="a" style="left:12.5px;top:120.02px;width:9px;height:1px;border-top:1px dotted #C4C4C4"></div>
<svg class="a" style="left:21px;top:114.52px" width="11" height="11" viewBox="0 0 11 11"><path d="M1,10V3q4.5-3 9,0v7M1,4h9" stroke="#333" fill="none" stroke-width="1.2"/></svg>
<div class="a t" style="left:36.5px;top:116.22px;font-size:8px;color:#000">Struktur</div>
<div class="a" style="left:12.5px;top:131.28px;width:9px;height:1px;border-top:1px dotted #C4C4C4"></div>
<svg class="a" style="left:21px;top:125.78px" width="11" height="11" viewBox="0 0 11 11"><path d="M2.5,1v7" stroke="#2030A0" stroke-width="1.4"/><path d="M1,10.5h10" stroke="#333" stroke-width="1.3"/><path d="M5,10V8h2v2M8,10V6h2v4" stroke="#333" fill="#E0E020"/><circle cx="2.5" cy="8.5" r="1.5" fill="#2030A0"/></svg>
<div class="a t" style="left:36.5px;top:127.48px;font-size:8px;color:#000">Belastung</div>
<div class="a" style="left:12.5px;top:142.54px;width:9px;height:1px;border-top:1px dotted #C4C4C4"></div>
<svg class="a" style="left:21px;top:137.04px" width="11" height="11" viewBox="0 0 11 11"><path d="M2.5,1v7" stroke="#2030A0" stroke-width="1.4"/><path d="M1,10.5h10" stroke="#333" stroke-width="1.3"/><circle cx="7.5" cy="3" r="2" fill="#E0E020" stroke="#333"/><path d="M5,9l2.5-4l2.5,4z" fill="#fff" stroke="#333"/></svg>
<div class="a t" style="left:36.5px;top:138.73999999999998px;font-size:8px;color:#000">Lastfälle und LF-Ko</div>
<div class="a" style="left:9px;top:139.54px;width:7px;height:7px;background:#fff;border:1px solid #9A9A9A"></div>
<div class="a" style="left:10.5px;top:142.54px;width:4px;height:1px;background:#2A4A9A"></div>
<div class="a" style="left:27px;top:153.8px;width:8px;height:1px;border-top:1px dotted #C4C4C4"></div>
<svg class="a" style="left:36px;top:148.3px" width="11" height="11" viewBox="0 0 11 11"><path d="M2.5,0v9" stroke="#2030A0" stroke-width="1.6"/><path d="M1,8l1.5,3l1.5-3" fill="#2030A0"/><rect x="5.5" y="0.5" width="5" height="4" fill="#fff" stroke="#2030A0"/></svg>
<div class="a t" style="left:51px;top:150.0px;font-size:8px;color:#000">Lastfälle</div>
<div class="a" style="left:27px;top:165.06px;width:8px;height:1px;border-top:1px dotted #C4C4C4"></div>
<svg class="a" style="left:36px;top:159.56px" width="11" height="11" viewBox="0 0 11 11"><path d="M2.5,0v9" stroke="#2030A0" stroke-width="1.6"/><path d="M1,8l1.5,3l1.5-3" fill="#2030A0"/><path d="M6,1v4M9,1v4" stroke="#2030A0" stroke-width="1.3"/></svg>
<div class="a t" style="left:51px;top:161.26px;font-size:8px;color:#000">Lastgruppen</div>
<div class="a" style="left:27px;top:176.32px;width:8px;height:1px;border-top:1px dotted #C4C4C4"></div>
<svg class="a" style="left:36px;top:170.82px" width="11" height="11" viewBox="0 0 11 11"><path d="M2.5,0v9" stroke="#2030A0" stroke-width="1.6"/><path d="M1,8l1.5,3l1.5-3" fill="#2030A0"/><path d="M6,1v3M9,1v3" stroke="#2030A0" stroke-width="1.3"/><circle cx="7.5" cy="8.5" r="2.3" fill="#F0E040" stroke="#A09020"/></svg>
<div class="a t" style="left:51px;top:172.51999999999998px;font-size:8px;color:#000">LF-Kombination</div>
<div class="a" style="left:27px;top:187.57999999999998px;width:8px;height:1px;border-top:1px dotted #C4C4C4"></div>
<svg class="a" style="left:36px;top:182.07999999999998px" width="11" height="11" viewBox="0 0 11 11"><path d="M2.5,0v9" stroke="#2030A0" stroke-width="1.6"/><path d="M1,8l1.5,3l1.5-3" fill="#2030A0"/><path d="M6,1v3M9,1v3" stroke="#2030A0" stroke-width="1.3"/><circle cx="7.5" cy="8.5" r="2.3" fill="#F0E040" stroke="#A09020"/></svg>
<div class="a t" style="left:51px;top:183.77999999999997px;font-size:8px;color:#000">Nichtlineare LF</div>
<div class="a" style="left:27px;top:198.84px;width:8px;height:1px;border-top:1px dotted #C4C4C4"></div>
<svg class="a" style="left:36px;top:193.34px" width="11" height="11" viewBox="0 0 11 11"><path d="M2.5,0v9" stroke="#2030A0" stroke-width="1.6"/><path d="M1,8l1.5,3l1.5-3" fill="#2030A0"/><path d="M6,1v3M9,1v3" stroke="#2030A0" stroke-width="1.3"/><circle cx="7.5" cy="8.5" r="2.3" fill="#F0E040" stroke="#A09020"/></svg>
<div class="a t" style="left:51px;top:195.04px;font-size:8px;color:#000">Stahlbeton-LFK</div>
<div class="a" style="left:27px;top:210.1px;width:8px;height:1px;border-top:1px dotted #C4C4C4"></div>
<svg class="a" style="left:36px;top:204.6px" width="11" height="11" viewBox="0 0 11 11"><path d="M2.5,1v8" stroke="#2030A0" stroke-width="1.6"/><path d="M0.5,10.5h11" stroke="#333" stroke-width="1.3"/><rect x="5.5" y="1.5" width="5" height="6" fill="#E8E8F8" stroke="#2030A0"/></svg>
<div class="a t" style="left:51px;top:206.29999999999998px;font-size:8px;color:#000">Ergebnisklasse</div>
<div class="a" style="left:12.5px;top:221.36px;width:9px;height:1px;border-top:1px dotted #C4C4C4"></div>
<svg class="a" style="left:21px;top:215.86px" width="11" height="11" viewBox="0 0 11 11"><circle cx="5.5" cy="5.5" r="5" fill="#30B030" stroke="#207020"/><circle cx="4" cy="4" r="1.8" fill="#A0F0A0"/></svg>
<div class="a t" style="left:36.5px;top:217.56px;font-size:8px;color:#000">Dynamik</div>
<div class="a" style="left:9px;top:218.36px;width:7px;height:7px;background:#fff;border:1px solid #9A9A9A"></div>
<div class="a" style="left:10.5px;top:221.36px;width:4px;height:1px;background:#2A4A9A"></div>
<div class="a" style="left:12px;top:219.86px;width:1px;height:4px;background:#2A4A9A"></div>
<div class="a" style="left:12.5px;top:232.62px;width:9px;height:1px;border-top:1px dotted #C4C4C4"></div>
<svg class="a" style="left:21px;top:227.12px" width="11" height="11" viewBox="0 0 11 11"><rect x="1.5" y="0.5" width="8" height="10" fill="#E8E8F0" stroke="#333"/><rect x="3" y="2" width="5" height="2.5" fill="#3050C0"/></svg>
<div class="a t" style="left:36.5px;top:228.82px;font-size:8px;color:#000">Berechnung, FE-N</div>
<div class="a" style="left:9px;top:229.62px;width:7px;height:7px;background:#fff;border:1px solid #9A9A9A"></div>
<div class="a" style="left:10.5px;top:232.62px;width:4px;height:1px;background:#2A4A9A"></div>
<div class="a" style="left:12px;top:231.12px;width:1px;height:4px;background:#2A4A9A"></div>
<div class="a" style="left:12.5px;top:243.88px;width:9px;height:1px;border-top:1px dotted #C4C4C4"></div>
<svg class="a" style="left:21px;top:238.38px" width="11" height="11" viewBox="0 0 11 11"><path d="M0.5,2q5,9 10,0" stroke="#2030A0" fill="none" stroke-width="1.3"/><path d="M0.5,2h10" stroke="#333"/></svg>
<div class="a t" style="left:36.5px;top:240.07999999999998px;font-size:8px;color:#000">Ergebnisse</div>
<div class="a" style="left:12.5px;top:255.14px;width:9px;height:1px;border-top:1px dotted #C4C4C4"></div>
<svg class="a" style="left:21px;top:249.64px" width="11" height="11" viewBox="0 0 11 11"><path d="M1,1h3v10h-3zM4,3h6v2h-6zM4,7h6v2h-6z" fill="#E0E030" stroke="#666"/></svg>
<div class="a t" style="left:36.5px;top:251.33999999999997px;font-size:8px;color:#000">Stahl</div>
<div class="a" style="left:12.5px;top:266.4px;width:9px;height:1px;border-top:1px dotted #C4C4C4"></div>
<svg class="a" style="left:21px;top:260.9px" width="11" height="11" viewBox="0 0 11 11"><path d="M0.5,1h10v3h-3v7h-4v-7h-3z" fill="#30C0D0" stroke="#208090"/></svg>
<div class="a t" style="left:36.5px;top:262.59999999999997px;font-size:8px;color:#000">Beton</div>
<div class="a" style="left:12.5px;top:277.65999999999997px;width:9px;height:1px;border-top:1px dotted #C4C4C4"></div>
<svg class="a" style="left:21px;top:272.15999999999997px" width="11" height="11" viewBox="0 0 11 11"><path d="M0.5,2q2.5-1.5 5,0.5q2.5-2 5-0.5v8q-2.5-1.5-5,0.5q-2.5-2-5-0.5z" fill="#F0E8C0" stroke="#333"/></svg>
<div class="a t" style="left:36.5px;top:273.85999999999996px;font-size:8px;color:#000">Dokument</div>
<div class="a" style="left:12.5px;top:288.91999999999996px;width:9px;height:1px;border-top:1px dotted #C4C4C4"></div>
<svg class="a" style="left:21px;top:283.41999999999996px" width="11" height="11" viewBox="0 0 11 11"><path d="M1,10l9-9" stroke="#2070A0" stroke-width="1.3"/><path d="M1,10h10l-10-6z" fill="#60A060" stroke="#333"/><path d="M1,11h10" stroke="#333"/></svg>
<div class="a t" style="left:36.5px;top:285.11999999999995px;font-size:8px;color:#000">Zeichnungswerkzeuge</div>
<div class="a" style="left:9px;top:285.91999999999996px;width:7px;height:7px;background:#fff;border:1px solid #9A9A9A"></div>
<div class="a" style="left:10.5px;top:288.91999999999996px;width:4px;height:1px;background:#2A4A9A"></div>
<div class="a" style="left:12px;top:287.41999999999996px;width:1px;height:4px;background:#2A4A9A"></div>
<div class="a" style="left:12.5px;top:300.18px;width:9px;height:1px;border-top:1px dotted #C4C4C4"></div>
<svg class="a" style="left:21px;top:294.68px" width="11" height="11" viewBox="0 0 11 11"><rect x="1.5" y="1" width="8" height="10" fill="#505060" stroke="#222"/><rect x="3" y="3" width="5" height="3" fill="#B0B0C0"/></svg>
<div class="a t" style="left:36.5px;top:296.38px;font-size:8px;color:#000">Bibliotheken</div>
<div class="a" style="left:9px;top:297.18px;width:7px;height:7px;background:#fff;border:1px solid #9A9A9A"></div>
<div class="a" style="left:10.5px;top:300.18px;width:4px;height:1px;background:#2A4A9A"></div>
<div class="a" style="left:12px;top:298.68px;width:1px;height:4px;background:#2A4A9A"></div>
<div class="a" style="left:12.5px;top:311.44px;width:9px;height:1px;border-top:1px dotted #C4C4C4"></div>
<svg class="a" style="left:21px;top:305.94px" width="11" height="11" viewBox="0 0 11 11"><path d="M1,10l8-8M2,2l8,8" stroke="#333" stroke-width="1.8"/><path d="M7,1l3,3" stroke="#D02020" stroke-width="1.5"/></svg>
<div class="a t" style="left:36.5px;top:307.64px;font-size:8px;color:#000">Werkzeuge</div>
<div class="a" style="left:9px;top:308.44px;width:7px;height:7px;background:#fff;border:1px solid #9A9A9A"></div>
<div class="a" style="left:10.5px;top:311.44px;width:4px;height:1px;background:#2A4A9A"></div>
<div class="a" style="left:12px;top:309.94px;width:1px;height:4px;background:#2A4A9A"></div>
<div class="a" style="left:12px;top:95px;width:1px;height:217px;border-left:1px dotted #C4C4C4"></div>
<div class="a" style="left:103px;top:91px;width:3px;height:562px;background:#fff"></div>
<div class="a" style="left:106px;top:90px;width:1px;height:580px;background:#858575"></div>
<div class="a" style="left:27px;top:148px;width:1px;height:62px;border-left:1px dotted #C4C4C4"></div>
<div class="a" style="left:4px;top:91px;width:102px;height:0px;"></div>
<div class="a" style="left:4px;top:654px;width:101px;height:13px;background:#FBFBF8"></div>
<div class="a" style="left:5px;top:655px;width:12px;height:11px;background:#C3D3F8;border:1px solid #B0C4EE;border-radius:2px"></div>
<svg class="a" style="left:8px;top:657px" width="6" height="7" viewBox="0 0 6 7"><path d="M4.5,0.5l-3,3l3,3" stroke="#2A4AA0" stroke-width="1.5" fill="none"/></svg>
<div class="a" style="left:20px;top:655px;width:45px;height:11px;background:#C3D3F8;border:1px solid #AFC2EC;border-radius:2px"></div>
<div class="a" style="left:39px;top:658px;width:6px;height:5px;border-left:1px solid #fff;border-right:1px solid #fff"></div>
<div class="a" style="left:90px;top:655px;width:12px;height:11px;background:#C3D3F8;border:1px solid #B0C4EE;border-radius:2px"></div>
<svg class="a" style="left:93px;top:657px" width="6" height="7" viewBox="0 0 6 7"><path d="M1.5,0.5l3,3l-3,3" stroke="#2A4AA0" stroke-width="1.5" fill="none"/></svg>
<div class="a" style="left:5px;top:668px;width:22px;height:16px;background:#F6F5EF;border:1px solid #8E8E80;border-top:none;border-right:2px solid #5A5A50;border-bottom:2px solid #5A5A50;border-radius:0 0 2px 2px"></div>
<svg class="a" style="left:8px;top:671px" width="12" height="10" viewBox="0 0 12 10"><circle cx="3" cy="3" r="2" fill="none" stroke="#333" stroke-width="1.2"/><path d="M4.5,4.5l2,2" stroke="#333"/><rect x="7" y="2" width="4" height="3" fill="#D02020"/><rect x="7" y="5" width="4" height="4" fill="#30C0D0"/></svg>
<div class="a" style="left:107px;top:75px;width:3px;height:523px;background:#ECE9D8"></div>
<div class="a" style="left:110px;top:75px;width:759px;height:523px;background:#fff"></div>
<div class="a" style="left:110px;top:75px;width:1px;height:523px;background:#858575"></div>
<div class="a" style="left:110px;top:75px;width:774px;height:1px;background:#8A8A78"></div>
<svg class="a" style="left:0;top:0" width="960" height="720"><polygon points="126.0,341.0 637.0,494.0 637.0,498.5 126.0,345.5" fill="#A0A0A0" stroke="#383838" stroke-width="0.8" /><polygon points="637.0,494.0 848.0,350.0 848.0,354.5 637.0,498.5" fill="#ACACAC" stroke="#383838" stroke-width="0.8" /><polygon points="126.0,341.0 637.0,494.0 848.0,350.0 772.0,330.0 702.0,387.0 262.0,258.0" fill="#C6C6C6" stroke="#606060" stroke-width="0.6" /><line x1="140.0" y1="336.0" x2="632.0" y2="481.0" stroke="#303030" stroke-width="0.9" stroke-dasharray="7,10"/><line x1="174.9" y1="346.9" x2="240.2" y2="302.4" stroke="#303030" stroke-width="0.9" stroke-dasharray="7,10"/><line x1="253.9" y1="370.5" x2="318.9" y2="326.3" stroke="#303030" stroke-width="0.9" stroke-dasharray="7,10"/><line x1="323.0" y1="391.3" x2="387.8" y2="347.2" stroke="#303030" stroke-width="0.9" stroke-dasharray="7,10"/><line x1="410.2" y1="417.4" x2="474.6" y2="373.5" stroke="#303030" stroke-width="0.9" stroke-dasharray="7,10"/><line x1="486.2" y1="440.2" x2="550.3" y2="396.5" stroke="#303030" stroke-width="0.9" stroke-dasharray="7,10"/><line x1="300.0" y1="223.0" x2="690.0" y2="341.0" stroke="#303030" stroke-width="0.9" stroke-dasharray="7,10"/><line x1="640.0" y1="483.0" x2="832.0" y2="353.0" stroke="#303030" stroke-width="0.9" stroke-dasharray="7,10"/><line x1="604.5" y1="474.0" x2="803.5" y2="344.0" stroke="#303030" stroke-width="0.9" stroke-dasharray="7,10"/><line x1="687.0" y1="338.0" x2="786.0" y2="273.0" stroke="#303030" stroke-width="0.9" stroke-dasharray="8,7"/><line x1="737.8" y1="305.0" x2="746.8" y2="299.0" stroke="#303030" stroke-width="0.9" /><line x1="746.8" y1="299.0" x2="746.8" y2="305.0" stroke="#303030" stroke-width="0.9" /><line x1="756.5" y1="292.5" x2="765.5" y2="286.5" stroke="#303030" stroke-width="0.9" /><line x1="765.5" y1="286.5" x2="765.5" y2="293.5" stroke="#303030" stroke-width="0.9" /><line x1="777.0" y1="279.0" x2="786.0" y2="273.0" stroke="#303030" stroke-width="0.9" /><line x1="786.0" y1="273.0" x2="786.0" y2="289.0" stroke="#303030" stroke-width="0.9" /><line x1="118.0" y1="349.1" x2="622.0" y2="500.0" stroke="#202020" stroke-width="0.8" /><line x1="114.0" y1="354.4" x2="606.0" y2="501.7" stroke="#202020" stroke-width="0.8" /><line x1="165.0" y1="357.2" x2="155.0" y2="366.7" stroke="#202020" stroke-width="0.8" /><line x1="253.0" y1="383.5" x2="243.0" y2="393.0" stroke="#202020" stroke-width="0.8" /><line x1="335.0" y1="408.1" x2="325.0" y2="417.6" stroke="#202020" stroke-width="0.8" /><line x1="400.0" y1="427.5" x2="390.0" y2="437.0" stroke="#202020" stroke-width="0.8" /><line x1="463.0" y1="446.4" x2="453.0" y2="455.9" stroke="#202020" stroke-width="0.8" /><line x1="530.0" y1="466.5" x2="520.0" y2="476.0" stroke="#202020" stroke-width="0.8" /><line x1="603.0" y1="488.3" x2="593.0" y2="497.8" stroke="#202020" stroke-width="0.8" /><text x="132" y="352.7964" font-size="6.3" fill="#333" font-family="Liberation Sans" transform="rotate(16.7 132 352.7964)">3100</text><text x="200" y="373.1556" font-size="6.3" fill="#333" font-family="Liberation Sans" transform="rotate(16.7 200 373.1556)">7440</text><text x="280" y="397.1076" font-size="6.3" fill="#333" font-family="Liberation Sans" transform="rotate(16.7 280 397.1076)">6380</text><text x="355" y="419.5626" font-size="6.3" fill="#333" font-family="Liberation Sans" transform="rotate(16.7 355 419.5626)">5940</text><text x="425" y="440.5206" font-size="6.3" fill="#333" font-family="Liberation Sans" transform="rotate(16.7 425 440.5206)">7140</text><text x="492" y="460.5804" font-size="6.3" fill="#333" font-family="Liberation Sans" transform="rotate(16.7 492 460.5804)">7440</text><text x="546" y="476.748" font-size="6.3" fill="#333" font-family="Liberation Sans" transform="rotate(16.7 546 476.748)">9520</text><text x="360" y="427.5596" font-size="6.3" fill="#333" font-family="Liberation Sans" transform="rotate(16.7 360 427.5596)">38500</text><line x1="652.0" y1="502.8" x2="866.0" y2="356.7" stroke="#202020" stroke-width="0.8" /><line x1="668.0" y1="498.8" x2="872.0" y2="359.6" stroke="#202020" stroke-width="0.8" /><line x1="650.0" y1="489.6" x2="670.0" y2="490.5" stroke="#202020" stroke-width="0.8" /><line x1="712.0" y1="447.3" x2="732.0" y2="448.2" stroke="#202020" stroke-width="0.8" /><line x1="772.0" y1="406.4" x2="792.0" y2="407.2" stroke="#202020" stroke-width="0.8" /><line x1="832.0" y1="365.4" x2="852.0" y2="366.3" stroke="#202020" stroke-width="0.8" /><text x="690" y="473.8275" font-size="6.3" fill="#333" font-family="Liberation Sans" transform="rotate(-34 690 473.8275)">8070</text><text x="745" y="436.29" font-size="6.3" fill="#333" font-family="Liberation Sans" transform="rotate(-34 745 436.29)">8140</text><text x="805" y="395.34000000000003" font-size="6.3" fill="#333" font-family="Liberation Sans" transform="rotate(-34 805 395.34000000000003)">8130</text><text x="850" y="364.6275" font-size="6.3" fill="#333" font-family="Liberation Sans" transform="rotate(-34 850 364.6275)">2880</text><text x="760" y="434.0525" font-size="6.3" fill="#333" font-family="Liberation Sans" transform="rotate(-34 760 434.0525)">17385</text><ellipse cx="114.0" cy="358.0" rx="2.8" ry="2.1" fill="#fff" stroke="#303030" stroke-width="0.9"/><ellipse cx="114.0" cy="358.0" rx="1.3" ry="1" fill="#555"/><ellipse cx="146.0" cy="370.0" rx="2.8" ry="2.1" fill="#fff" stroke="#303030" stroke-width="0.9"/><ellipse cx="146.0" cy="370.0" rx="1.3" ry="1" fill="#555"/><ellipse cx="225.0" cy="393.6" rx="2.8" ry="2.1" fill="#fff" stroke="#303030" stroke-width="0.9"/><ellipse cx="225.0" cy="393.6" rx="1.3" ry="1" fill="#555"/><ellipse cx="294.0" cy="414.3" rx="2.8" ry="2.1" fill="#fff" stroke="#303030" stroke-width="0.9"/><ellipse cx="294.0" cy="414.3" rx="1.3" ry="1" fill="#555"/><ellipse cx="378.0" cy="439.4" rx="2.8" ry="2.1" fill="#fff" stroke="#303030" stroke-width="0.9"/><ellipse cx="378.0" cy="439.4" rx="1.3" ry="1" fill="#555"/><ellipse cx="465.0" cy="465.5" rx="2.8" ry="2.1" fill="#fff" stroke="#303030" stroke-width="0.9"/><ellipse cx="465.0" cy="465.5" rx="1.3" ry="1" fill="#555"/><ellipse cx="548.0" cy="490.3" rx="2.8" ry="2.1" fill="#fff" stroke="#303030" stroke-width="0.9"/><ellipse cx="548.0" cy="490.3" rx="1.3" ry="1" fill="#555"/><ellipse cx="568.0" cy="512.0" rx="2.8" ry="2.1" fill="#fff" stroke="#303030" stroke-width="0.9"/><ellipse cx="568.0" cy="512.0" rx="1.3" ry="1" fill="#555"/><ellipse cx="612.0" cy="503.0" rx="2.8" ry="2.1" fill="#fff" stroke="#303030" stroke-width="0.9"/><ellipse cx="612.0" cy="503.0" rx="1.3" ry="1" fill="#555"/><ellipse cx="682.0" cy="501.0" rx="2.8" ry="2.1" fill="#fff" stroke="#303030" stroke-width="0.9"/><ellipse cx="682.0" cy="501.0" rx="1.3" ry="1" fill="#555"/><ellipse cx="739.0" cy="461.0" rx="2.8" ry="2.1" fill="#fff" stroke="#303030" stroke-width="0.9"/><ellipse cx="739.0" cy="461.0" rx="1.3" ry="1" fill="#555"/><ellipse cx="800.0" cy="420.0" rx="2.8" ry="2.1" fill="#fff" stroke="#303030" stroke-width="0.9"/><ellipse cx="800.0" cy="420.0" rx="1.3" ry="1" fill="#555"/><ellipse cx="860.0" cy="380.0" rx="2.8" ry="2.1" fill="#fff" stroke="#303030" stroke-width="0.9"/><ellipse cx="860.0" cy="380.0" rx="1.3" ry="1" fill="#555"/><ellipse cx="789.0" cy="269.0" rx="2.8" ry="2.1" fill="#fff" stroke="#303030" stroke-width="0.9"/><ellipse cx="789.0" cy="269.0" rx="1.3" ry="1" fill="#555"/><line x1="569.0" y1="473.0" x2="569.0" y2="505.0" stroke="#202020" stroke-width="0.8" /><line x1="569.0" y1="494.0" x2="622.0" y2="470.0" stroke="#202020" stroke-width="0.8" /><line x1="569.0" y1="486.0" x2="605.0" y2="470.0" stroke="#202020" stroke-width="0.8" /><text x="270" y="287" font-size="7.5" fill="#333" font-family="Liberation Sans" transform="rotate(16 270 287)">3100</text><text x="400" y="328" font-size="7.5" fill="#333" font-family="Liberation Sans" transform="rotate(16 400 328)">6300</text><text x="558" y="377" font-size="7.5" fill="#333" font-family="Liberation Sans" transform="rotate(16 558 377)">7140</text><rect x="259.6" y="210.0" width="6.0" height="46.0" fill="#363A40"/><rect x="260.5" y="210.0" width="2.5" height="46.0" fill="#E4F066"/><rect x="263.0" y="210.0" width="1.7" height="46.0" fill="#8A9636"/><rect x="292.2" y="220.0" width="6.0" height="46.0" fill="#363A40"/><rect x="293.1" y="220.0" width="2.5" height="46.0" fill="#E4F066"/><rect x="295.7" y="220.0" width="1.7" height="46.0" fill="#8A9636"/><rect x="370.7" y="244.1" width="6.0" height="46.0" fill="#363A40"/><rect x="371.6" y="244.1" width="2.5" height="46.0" fill="#E4F066"/><rect x="374.1" y="244.1" width="1.7" height="46.0" fill="#8A9636"/><rect x="439.4" y="265.1" width="6.0" height="46.0" fill="#363A40"/><rect x="440.3" y="265.1" width="2.5" height="46.0" fill="#E4F066"/><rect x="442.8" y="265.1" width="1.7" height="46.0" fill="#8A9636"/><rect x="525.9" y="291.6" width="6.0" height="46.0" fill="#363A40"/><rect x="526.8" y="291.6" width="2.5" height="46.0" fill="#E4F066"/><rect x="529.3" y="291.6" width="1.7" height="46.0" fill="#8A9636"/><rect x="601.3" y="314.8" width="6.0" height="46.0" fill="#363A40"/><rect x="602.2" y="314.8" width="2.5" height="46.0" fill="#E4F066"/><rect x="604.8" y="314.8" width="1.7" height="46.0" fill="#8A9636"/><rect x="198.9" y="251.3" width="6.0" height="46.0" fill="#363A40"/><rect x="199.8" y="251.3" width="2.5" height="46.0" fill="#E4F066"/><rect x="202.3" y="251.3" width="1.7" height="46.0" fill="#8A9636"/><rect x="231.7" y="261.2" width="6.0" height="46.0" fill="#363A40"/><rect x="232.6" y="261.2" width="2.5" height="46.0" fill="#E4F066"/><rect x="235.1" y="261.2" width="1.7" height="46.0" fill="#8A9636"/><rect x="310.4" y="285.1" width="6.0" height="46.0" fill="#363A40"/><rect x="311.3" y="285.1" width="2.5" height="46.0" fill="#E4F066"/><rect x="313.8" y="285.1" width="1.7" height="46.0" fill="#8A9636"/><rect x="379.3" y="306.0" width="6.0" height="46.0" fill="#363A40"/><rect x="380.2" y="306.0" width="2.5" height="46.0" fill="#E4F066"/><rect x="382.8" y="306.0" width="1.7" height="46.0" fill="#8A9636"/><rect x="466.1" y="332.3" width="6.0" height="46.0" fill="#363A40"/><rect x="467.0" y="332.3" width="2.5" height="46.0" fill="#E4F066"/><rect x="469.6" y="332.3" width="1.7" height="46.0" fill="#8A9636"/><rect x="541.9" y="355.3" width="6.0" height="46.0" fill="#363A40"/><rect x="542.8" y="355.3" width="2.5" height="46.0" fill="#E4F066"/><rect x="545.3" y="355.3" width="1.7" height="46.0" fill="#8A9636"/><rect x="140.6" y="291.0" width="6.0" height="46.0" fill="#363A40"/><rect x="141.5" y="291.0" width="2.5" height="46.0" fill="#E4F066"/><rect x="144.0" y="291.0" width="1.7" height="46.0" fill="#8A9636"/><rect x="173.5" y="300.9" width="6.0" height="46.0" fill="#363A40"/><rect x="174.4" y="300.9" width="2.5" height="46.0" fill="#E4F066"/><rect x="176.9" y="300.9" width="1.7" height="46.0" fill="#8A9636"/><rect x="252.5" y="324.5" width="6.0" height="46.0" fill="#363A40"/><rect x="253.4" y="324.5" width="2.5" height="46.0" fill="#E4F066"/><rect x="255.9" y="324.5" width="1.7" height="46.0" fill="#8A9636"/><rect x="321.6" y="345.3" width="6.0" height="46.0" fill="#363A40"/><rect x="322.5" y="345.3" width="2.5" height="46.0" fill="#E4F066"/><rect x="325.1" y="345.3" width="1.7" height="46.0" fill="#8A9636"/><rect x="408.8" y="371.4" width="6.0" height="46.0" fill="#363A40"/><rect x="409.7" y="371.4" width="2.5" height="46.0" fill="#E4F066"/><rect x="412.2" y="371.4" width="1.7" height="46.0" fill="#8A9636"/><rect x="484.8" y="394.2" width="6.0" height="46.0" fill="#363A40"/><rect x="485.7" y="394.2" width="2.5" height="46.0" fill="#E4F066"/><rect x="488.2" y="394.2" width="1.7" height="46.0" fill="#8A9636"/><rect x="625.3" y="382.6" width="6.0" height="46.0" fill="#363A40"/><rect x="626.7" y="382.6" width="3.2" height="46.0" fill="#5A5E48"/><rect x="689.1" y="342.3" width="6.0" height="46.0" fill="#363A40"/><rect x="690.5" y="342.3" width="3.2" height="46.0" fill="#5A5E48"/><rect x="746.8" y="305.9" width="6.0" height="46.0" fill="#363A40"/><rect x="748.2" y="305.9" width="3.2" height="46.0" fill="#5A5E48"/><rect x="830.6" y="307.0" width="6.0" height="46.0" fill="#363A40"/><rect x="832.0" y="307.0" width="3.2" height="46.0" fill="#5A5E48"/><rect x="567.6" y="419.0" width="6.0" height="46.0" fill="#363A40"/><rect x="568.5" y="419.0" width="2.5" height="46.0" fill="#E4F066"/><rect x="571.0" y="419.0" width="1.7" height="46.0" fill="#8A9636"/><rect x="638.6" y="437.0" width="6.0" height="47.0" fill="#363A40"/><rect x="639.5" y="437.0" width="2.5" height="47.0" fill="#E4F066"/><rect x="642.0" y="437.0" width="1.7" height="47.0" fill="#8A9636"/><rect x="692.4" y="400.6" width="6.0" height="47.0" fill="#363A40"/><rect x="693.3" y="400.6" width="2.5" height="47.0" fill="#E4F066"/><rect x="695.8" y="400.6" width="1.7" height="47.0" fill="#8A9636"/><rect x="751.9" y="360.3" width="6.0" height="47.0" fill="#363A40"/><rect x="752.8" y="360.3" width="2.5" height="47.0" fill="#E4F066"/><rect x="755.3" y="360.3" width="1.7" height="47.0" fill="#8A9636"/><rect x="805.6" y="323.9" width="6.0" height="47.0" fill="#363A40"/><rect x="806.5" y="323.9" width="2.5" height="47.0" fill="#E4F066"/><rect x="809.1" y="323.9" width="1.7" height="47.0" fill="#8A9636"/><line x1="192.7" y1="288.7" x2="271.6" y2="312.5" stroke="#5A5D6C" stroke-width="1.0" /><line x1="204.6" y1="280.6" x2="283.4" y2="304.4" stroke="#5A5D6C" stroke-width="1.0" /><line x1="216.4" y1="272.6" x2="295.2" y2="296.4" stroke="#5A5D6C" stroke-width="1.0" /><line x1="228.3" y1="264.5" x2="307.1" y2="288.3" stroke="#5A5D6C" stroke-width="1.0" /><line x1="240.2" y1="256.4" x2="318.9" y2="280.3" stroke="#5A5D6C" stroke-width="1.0" /><line x1="252.1" y1="248.3" x2="330.7" y2="272.2" stroke="#5A5D6C" stroke-width="1.0" /><line x1="264.0" y1="240.2" x2="342.5" y2="264.2" stroke="#5A5D6C" stroke-width="1.0" /><line x1="275.8" y1="232.1" x2="354.4" y2="256.1" stroke="#5A5D6C" stroke-width="1.0" /><line x1="340.7" y1="333.2" x2="427.7" y2="359.4" stroke="#5A5D6C" stroke-width="1.0" /><line x1="352.5" y1="325.2" x2="439.4" y2="351.4" stroke="#5A5D6C" stroke-width="1.0" /><line x1="364.3" y1="317.2" x2="451.1" y2="343.5" stroke="#5A5D6C" stroke-width="1.0" /><line x1="376.0" y1="309.2" x2="462.9" y2="335.5" stroke="#5A5D6C" stroke-width="1.0" /><line x1="387.8" y1="301.2" x2="474.6" y2="327.5" stroke="#5A5D6C" stroke-width="1.0" /><line x1="399.6" y1="293.2" x2="486.3" y2="319.6" stroke="#5A5D6C" stroke-width="1.0" /><line x1="411.3" y1="285.2" x2="498.0" y2="311.6" stroke="#5A5D6C" stroke-width="1.0" /><line x1="423.1" y1="277.1" x2="509.7" y2="303.6" stroke="#5A5D6C" stroke-width="1.0" /><line x1="503.6" y1="382.3" x2="586.4" y2="407.1" stroke="#5A5D6C" stroke-width="1.0" /><line x1="515.3" y1="374.3" x2="598.0" y2="399.2" stroke="#5A5D6C" stroke-width="1.0" /><line x1="527.0" y1="366.4" x2="609.6" y2="391.4" stroke="#5A5D6C" stroke-width="1.0" /><line x1="538.6" y1="358.4" x2="621.2" y2="383.4" stroke="#5A5D6C" stroke-width="1.0" /><line x1="550.3" y1="350.5" x2="632.8" y2="375.6" stroke="#5A5D6C" stroke-width="1.0" /><line x1="561.9" y1="342.6" x2="644.4" y2="367.6" stroke="#5A5D6C" stroke-width="1.0" /><line x1="573.6" y1="334.6" x2="656.0" y2="359.8" stroke="#5A5D6C" stroke-width="1.0" /><line x1="585.3" y1="326.7" x2="667.6" y2="351.9" stroke="#5A5D6C" stroke-width="1.0" /><line x1="186.8" y1="292.8" x2="265.7" y2="316.5" stroke="#363A40" stroke-width="4.3" stroke-linecap="square"/><line x1="186.8" y1="292.8" x2="265.7" y2="316.5" stroke="#94A23C" stroke-width="1.8" /><line x1="186.8" y1="292.4" x2="265.7" y2="316.1" stroke="#CEDB62" stroke-width="0.9" /><line x1="198.6" y1="284.7" x2="277.5" y2="308.4" stroke="#363A40" stroke-width="4.3" stroke-linecap="square"/><line x1="198.6" y1="284.7" x2="277.5" y2="308.4" stroke="#94A23C" stroke-width="1.8" /><line x1="198.6" y1="284.3" x2="277.5" y2="308.0" stroke="#CEDB62" stroke-width="0.9" /><line x1="210.5" y1="276.6" x2="289.3" y2="300.4" stroke="#363A40" stroke-width="4.3" stroke-linecap="square"/><line x1="210.5" y1="276.6" x2="289.3" y2="300.4" stroke="#94A23C" stroke-width="1.8" /><line x1="210.5" y1="276.2" x2="289.3" y2="300.0" stroke="#CEDB62" stroke-width="0.9" /><line x1="222.4" y1="268.5" x2="301.2" y2="292.3" stroke="#363A40" stroke-width="4.3" stroke-linecap="square"/><line x1="222.4" y1="268.5" x2="301.2" y2="292.3" stroke="#94A23C" stroke-width="1.8" /><line x1="222.4" y1="268.1" x2="301.2" y2="291.9" stroke="#CEDB62" stroke-width="0.9" /><line x1="234.3" y1="260.4" x2="313.0" y2="284.3" stroke="#363A40" stroke-width="4.3" stroke-linecap="square"/><line x1="234.3" y1="260.4" x2="313.0" y2="284.3" stroke="#94A23C" stroke-width="1.8" /><line x1="234.3" y1="260.0" x2="313.0" y2="283.9" stroke="#CEDB62" stroke-width="0.9" /><line x1="246.1" y1="252.3" x2="324.8" y2="276.3" stroke="#363A40" stroke-width="4.3" stroke-linecap="square"/><line x1="246.1" y1="252.3" x2="324.8" y2="276.3" stroke="#94A23C" stroke-width="1.8" /><line x1="246.1" y1="252.0" x2="324.8" y2="275.9" stroke="#CEDB62" stroke-width="0.9" /><line x1="258.0" y1="244.3" x2="336.6" y2="268.2" stroke="#363A40" stroke-width="4.3" stroke-linecap="square"/><line x1="258.0" y1="244.3" x2="336.6" y2="268.2" stroke="#94A23C" stroke-width="1.8" /><line x1="258.0" y1="243.9" x2="336.6" y2="267.8" stroke="#CEDB62" stroke-width="0.9" /><line x1="269.9" y1="236.2" x2="348.4" y2="260.2" stroke="#363A40" stroke-width="4.3" stroke-linecap="square"/><line x1="269.9" y1="236.2" x2="348.4" y2="260.2" stroke="#94A23C" stroke-width="1.8" /><line x1="269.9" y1="235.8" x2="348.4" y2="259.8" stroke="#CEDB62" stroke-width="0.9" /><line x1="281.8" y1="228.1" x2="360.3" y2="252.1" stroke="#363A40" stroke-width="4.3" stroke-linecap="square"/><line x1="281.8" y1="228.1" x2="360.3" y2="252.1" stroke="#94A23C" stroke-width="1.8" /><line x1="281.8" y1="227.7" x2="360.3" y2="251.7" stroke="#CEDB62" stroke-width="0.9" /><line x1="334.8" y1="337.3" x2="421.9" y2="363.4" stroke="#363A40" stroke-width="4.3" stroke-linecap="square"/><line x1="334.8" y1="337.3" x2="421.9" y2="363.4" stroke="#94A23C" stroke-width="1.8" /><line x1="334.8" y1="336.9" x2="421.9" y2="363.0" stroke="#CEDB62" stroke-width="0.9" /><line x1="346.6" y1="329.2" x2="433.6" y2="355.4" stroke="#363A40" stroke-width="4.3" stroke-linecap="square"/><line x1="346.6" y1="329.2" x2="433.6" y2="355.4" stroke="#94A23C" stroke-width="1.8" /><line x1="346.6" y1="328.8" x2="433.6" y2="355.0" stroke="#CEDB62" stroke-width="0.9" /><line x1="358.4" y1="321.2" x2="445.3" y2="347.5" stroke="#363A40" stroke-width="4.3" stroke-linecap="square"/><line x1="358.4" y1="321.2" x2="445.3" y2="347.5" stroke="#94A23C" stroke-width="1.8" /><line x1="358.4" y1="320.8" x2="445.3" y2="347.1" stroke="#CEDB62" stroke-width="0.9" /><line x1="370.1" y1="313.2" x2="457.0" y2="339.5" stroke="#363A40" stroke-width="4.3" stroke-linecap="square"/><line x1="370.1" y1="313.2" x2="457.0" y2="339.5" stroke="#94A23C" stroke-width="1.8" /><line x1="370.1" y1="312.8" x2="457.0" y2="339.1" stroke="#CEDB62" stroke-width="0.9" /><line x1="381.9" y1="305.2" x2="468.7" y2="331.5" stroke="#363A40" stroke-width="4.3" stroke-linecap="square"/><line x1="381.9" y1="305.2" x2="468.7" y2="331.5" stroke="#94A23C" stroke-width="1.8" /><line x1="381.9" y1="304.8" x2="468.7" y2="331.1" stroke="#CEDB62" stroke-width="0.9" /><line x1="393.7" y1="297.2" x2="480.4" y2="323.5" stroke="#363A40" stroke-width="4.3" stroke-linecap="square"/><line x1="393.7" y1="297.2" x2="480.4" y2="323.5" stroke="#94A23C" stroke-width="1.8" /><line x1="393.7" y1="296.8" x2="480.4" y2="323.1" stroke="#CEDB62" stroke-width="0.9" /><line x1="405.5" y1="289.2" x2="492.1" y2="315.6" stroke="#363A40" stroke-width="4.3" stroke-linecap="square"/><line x1="405.5" y1="289.2" x2="492.1" y2="315.6" stroke="#94A23C" stroke-width="1.8" /><line x1="405.5" y1="288.8" x2="492.1" y2="315.2" stroke="#CEDB62" stroke-width="0.9" /><line x1="417.2" y1="281.2" x2="503.8" y2="307.6" stroke="#363A40" stroke-width="4.3" stroke-linecap="square"/><line x1="417.2" y1="281.2" x2="503.8" y2="307.6" stroke="#94A23C" stroke-width="1.8" /><line x1="417.2" y1="280.8" x2="503.8" y2="307.2" stroke="#CEDB62" stroke-width="0.9" /><line x1="429.0" y1="273.1" x2="515.6" y2="299.6" stroke="#363A40" stroke-width="4.3" stroke-linecap="square"/><line x1="429.0" y1="273.1" x2="515.6" y2="299.6" stroke="#94A23C" stroke-width="1.8" /><line x1="429.0" y1="272.7" x2="515.6" y2="299.2" stroke="#CEDB62" stroke-width="0.9" /><line x1="497.8" y1="386.2" x2="580.6" y2="411.1" stroke="#363A40" stroke-width="4.3" stroke-linecap="square"/><line x1="497.8" y1="386.2" x2="580.6" y2="411.1" stroke="#94A23C" stroke-width="1.8" /><line x1="497.8" y1="385.8" x2="580.6" y2="410.7" stroke="#CEDB62" stroke-width="0.9" /><line x1="509.5" y1="378.3" x2="592.2" y2="403.2" stroke="#363A40" stroke-width="4.3" stroke-linecap="square"/><line x1="509.5" y1="378.3" x2="592.2" y2="403.2" stroke="#94A23C" stroke-width="1.8" /><line x1="509.5" y1="377.9" x2="592.2" y2="402.8" stroke="#CEDB62" stroke-width="0.9" /><line x1="521.1" y1="370.4" x2="603.8" y2="395.3" stroke="#363A40" stroke-width="4.3" stroke-linecap="square"/><line x1="521.1" y1="370.4" x2="603.8" y2="395.3" stroke="#94A23C" stroke-width="1.8" /><line x1="521.1" y1="370.0" x2="603.8" y2="394.9" stroke="#CEDB62" stroke-width="0.9" /><line x1="532.8" y1="362.4" x2="615.4" y2="387.4" stroke="#363A40" stroke-width="4.3" stroke-linecap="square"/><line x1="532.8" y1="362.4" x2="615.4" y2="387.4" stroke="#94A23C" stroke-width="1.8" /><line x1="532.8" y1="362.0" x2="615.4" y2="387.0" stroke="#CEDB62" stroke-width="0.9" /><line x1="544.5" y1="354.5" x2="627.0" y2="379.5" stroke="#363A40" stroke-width="4.3" stroke-linecap="square"/><line x1="544.5" y1="354.5" x2="627.0" y2="379.5" stroke="#94A23C" stroke-width="1.8" /><line x1="544.5" y1="354.1" x2="627.0" y2="379.1" stroke="#CEDB62" stroke-width="0.9" /><line x1="556.1" y1="346.5" x2="638.6" y2="371.6" stroke="#363A40" stroke-width="4.3" stroke-linecap="square"/><line x1="556.1" y1="346.5" x2="638.6" y2="371.6" stroke="#94A23C" stroke-width="1.8" /><line x1="556.1" y1="346.1" x2="638.6" y2="371.2" stroke="#CEDB62" stroke-width="0.9" /><line x1="567.8" y1="338.6" x2="650.2" y2="363.7" stroke="#363A40" stroke-width="4.3" stroke-linecap="square"/><line x1="567.8" y1="338.6" x2="650.2" y2="363.7" stroke="#94A23C" stroke-width="1.8" /><line x1="567.8" y1="338.2" x2="650.2" y2="363.3" stroke="#CEDB62" stroke-width="0.9" /><line x1="579.4" y1="330.7" x2="661.8" y2="355.8" stroke="#363A40" stroke-width="4.3" stroke-linecap="square"/><line x1="579.4" y1="330.7" x2="661.8" y2="355.8" stroke="#94A23C" stroke-width="1.8" /><line x1="579.4" y1="330.3" x2="661.8" y2="355.4" stroke="#CEDB62" stroke-width="0.9" /><line x1="591.1" y1="322.7" x2="673.4" y2="347.9" stroke="#363A40" stroke-width="4.3" stroke-linecap="square"/><line x1="591.1" y1="322.7" x2="673.4" y2="347.9" stroke="#94A23C" stroke-width="1.8" /><line x1="591.1" y1="322.3" x2="673.4" y2="347.5" stroke="#CEDB62" stroke-width="0.9" /><line x1="142.0" y1="291.0" x2="174.9" y2="300.9" stroke="#363A40" stroke-width="4.8" stroke-linecap="square"/><line x1="142.0" y1="291.0" x2="174.9" y2="300.9" stroke="#94A23C" stroke-width="2.3" /><line x1="142.0" y1="290.5" x2="174.9" y2="300.4" stroke="#CEDB62" stroke-width="1.15" /><line x1="153.9" y1="282.9" x2="186.8" y2="292.8" stroke="#363A40" stroke-width="4.0" stroke-linecap="square"/><line x1="153.9" y1="282.9" x2="186.8" y2="292.8" stroke="#94A23C" stroke-width="1.5" /><line x1="153.9" y1="282.6" x2="186.8" y2="292.4" stroke="#CEDB62" stroke-width="0.75" /><line x1="165.8" y1="274.8" x2="198.6" y2="284.7" stroke="#363A40" stroke-width="4.0" stroke-linecap="square"/><line x1="165.8" y1="274.8" x2="198.6" y2="284.7" stroke="#94A23C" stroke-width="1.5" /><line x1="165.8" y1="274.5" x2="198.6" y2="284.4" stroke="#CEDB62" stroke-width="0.75" /><line x1="177.7" y1="266.7" x2="210.5" y2="276.6" stroke="#363A40" stroke-width="4.0" stroke-linecap="square"/><line x1="177.7" y1="266.7" x2="210.5" y2="276.6" stroke="#94A23C" stroke-width="1.5" /><line x1="177.7" y1="266.4" x2="210.5" y2="276.3" stroke="#CEDB62" stroke-width="0.75" /><line x1="189.6" y1="258.6" x2="222.4" y2="268.5" stroke="#363A40" stroke-width="4.0" stroke-linecap="square"/><line x1="189.6" y1="258.6" x2="222.4" y2="268.5" stroke="#94A23C" stroke-width="1.5" /><line x1="189.6" y1="258.3" x2="222.4" y2="268.2" stroke="#CEDB62" stroke-width="0.75" /><line x1="201.5" y1="250.5" x2="234.3" y2="260.4" stroke="#363A40" stroke-width="4.0" stroke-linecap="square"/><line x1="201.5" y1="250.5" x2="234.3" y2="260.4" stroke="#94A23C" stroke-width="1.5" /><line x1="201.5" y1="250.2" x2="234.3" y2="260.1" stroke="#CEDB62" stroke-width="0.75" /><line x1="213.4" y1="242.4" x2="246.1" y2="252.3" stroke="#363A40" stroke-width="4.0" stroke-linecap="square"/><line x1="213.4" y1="242.4" x2="246.1" y2="252.3" stroke="#94A23C" stroke-width="1.5" /><line x1="213.4" y1="242.1" x2="246.1" y2="252.0" stroke="#CEDB62" stroke-width="0.75" /><line x1="225.3" y1="234.3" x2="258.0" y2="244.3" stroke="#363A40" stroke-width="4.0" stroke-linecap="square"/><line x1="225.3" y1="234.3" x2="258.0" y2="244.3" stroke="#94A23C" stroke-width="1.5" /><line x1="225.3" y1="234.0" x2="258.0" y2="243.9" stroke="#CEDB62" stroke-width="0.75" /><line x1="237.2" y1="226.2" x2="269.9" y2="236.2" stroke="#363A40" stroke-width="4.0" stroke-linecap="square"/><line x1="237.2" y1="226.2" x2="269.9" y2="236.2" stroke="#94A23C" stroke-width="1.5" /><line x1="237.2" y1="225.9" x2="269.9" y2="235.8" stroke="#CEDB62" stroke-width="0.75" /><line x1="249.1" y1="218.1" x2="281.8" y2="228.1" stroke="#363A40" stroke-width="4.0" stroke-linecap="square"/><line x1="249.1" y1="218.1" x2="281.8" y2="228.1" stroke="#94A23C" stroke-width="1.5" /><line x1="249.1" y1="217.8" x2="281.8" y2="227.8" stroke="#CEDB62" stroke-width="0.75" /><line x1="261.0" y1="210.0" x2="293.6" y2="220.0" stroke="#363A40" stroke-width="4.8" stroke-linecap="square"/><line x1="261.0" y1="210.0" x2="293.6" y2="220.0" stroke="#94A23C" stroke-width="2.3" /><line x1="261.0" y1="209.5" x2="293.6" y2="219.5" stroke="#CEDB62" stroke-width="1.15" /><line x1="253.9" y1="324.5" x2="323.0" y2="345.3" stroke="#363A40" stroke-width="4.8" stroke-linecap="square"/><line x1="253.9" y1="324.5" x2="323.0" y2="345.3" stroke="#94A23C" stroke-width="2.3" /><line x1="253.9" y1="324.0" x2="323.0" y2="344.8" stroke="#CEDB62" stroke-width="1.15" /><line x1="265.7" y1="316.5" x2="334.8" y2="337.3" stroke="#363A40" stroke-width="4.2" stroke-linecap="square"/><line x1="265.7" y1="316.5" x2="334.8" y2="337.3" stroke="#94A23C" stroke-width="1.7" /><line x1="265.7" y1="316.1" x2="334.8" y2="336.9" stroke="#CEDB62" stroke-width="0.85" /><line x1="277.5" y1="308.4" x2="346.6" y2="329.2" stroke="#363A40" stroke-width="4.2" stroke-linecap="square"/><line x1="277.5" y1="308.4" x2="346.6" y2="329.2" stroke="#94A23C" stroke-width="1.7" /><line x1="277.5" y1="308.1" x2="346.6" y2="328.9" stroke="#CEDB62" stroke-width="0.85" /><line x1="289.3" y1="300.4" x2="358.4" y2="321.2" stroke="#363A40" stroke-width="4.2" stroke-linecap="square"/><line x1="289.3" y1="300.4" x2="358.4" y2="321.2" stroke="#94A23C" stroke-width="1.7" /><line x1="289.3" y1="300.0" x2="358.4" y2="320.9" stroke="#CEDB62" stroke-width="0.85" /><line x1="301.2" y1="292.3" x2="370.1" y2="313.2" stroke="#363A40" stroke-width="4.2" stroke-linecap="square"/><line x1="301.2" y1="292.3" x2="370.1" y2="313.2" stroke="#94A23C" stroke-width="1.7" /><line x1="301.2" y1="292.0" x2="370.1" y2="312.8" stroke="#CEDB62" stroke-width="0.85" /><line x1="313.0" y1="284.3" x2="381.9" y2="305.2" stroke="#363A40" stroke-width="4.2" stroke-linecap="square"/><line x1="313.0" y1="284.3" x2="381.9" y2="305.2" stroke="#94A23C" stroke-width="1.7" /><line x1="313.0" y1="283.9" x2="381.9" y2="304.8" stroke="#CEDB62" stroke-width="0.85" /><line x1="372.1" y1="244.1" x2="440.8" y2="265.1" stroke="#363A40" stroke-width="4.8" stroke-linecap="square"/><line x1="372.1" y1="244.1" x2="440.8" y2="265.1" stroke="#94A23C" stroke-width="2.3" /><line x1="372.1" y1="243.6" x2="440.8" y2="264.6" stroke="#CEDB62" stroke-width="1.15" /><line x1="320.1" y1="279.5" x2="389.0" y2="300.4" stroke="#3E4230" stroke-width="2.0" /><line x1="320.1" y1="278.8" x2="389.0" y2="299.7" stroke="#9AA850" stroke-width="0.7" /><line x1="327.2" y1="274.6" x2="396.0" y2="295.6" stroke="#3E4230" stroke-width="2.0" /><line x1="327.2" y1="273.9" x2="396.0" y2="294.9" stroke="#9AA850" stroke-width="0.7" /><line x1="334.3" y1="269.8" x2="403.1" y2="290.8" stroke="#3E4230" stroke-width="2.0" /><line x1="334.3" y1="269.1" x2="403.1" y2="290.1" stroke="#9AA850" stroke-width="0.7" /><line x1="341.4" y1="265.0" x2="410.2" y2="286.0" stroke="#3E4230" stroke-width="2.0" /><line x1="341.4" y1="264.3" x2="410.2" y2="285.3" stroke="#9AA850" stroke-width="0.7" /><line x1="348.4" y1="260.2" x2="417.2" y2="281.2" stroke="#3E4230" stroke-width="2.0" /><line x1="348.4" y1="259.5" x2="417.2" y2="280.5" stroke="#9AA850" stroke-width="0.7" /><line x1="355.5" y1="255.3" x2="424.3" y2="276.3" stroke="#3E4230" stroke-width="2.0" /><line x1="355.5" y1="254.6" x2="424.3" y2="275.6" stroke="#9AA850" stroke-width="0.7" /><line x1="362.6" y1="250.5" x2="431.4" y2="271.5" stroke="#3E4230" stroke-width="2.0" /><line x1="362.6" y1="249.8" x2="431.4" y2="270.8" stroke="#9AA850" stroke-width="0.7" /><line x1="369.7" y1="245.7" x2="438.4" y2="266.7" stroke="#3E4230" stroke-width="2.0" /><line x1="369.7" y1="245.0" x2="438.4" y2="266.0" stroke="#9AA850" stroke-width="0.7" /><line x1="410.2" y1="371.4" x2="486.2" y2="394.2" stroke="#363A40" stroke-width="4.8" stroke-linecap="square"/><line x1="410.2" y1="371.4" x2="486.2" y2="394.2" stroke="#94A23C" stroke-width="2.3" /><line x1="410.2" y1="370.9" x2="486.2" y2="393.7" stroke="#CEDB62" stroke-width="1.15" /><line x1="421.9" y1="363.4" x2="497.8" y2="386.2" stroke="#363A40" stroke-width="4.2" stroke-linecap="square"/><line x1="421.9" y1="363.4" x2="497.8" y2="386.2" stroke="#94A23C" stroke-width="1.7" /><line x1="421.9" y1="363.0" x2="497.8" y2="385.9" stroke="#CEDB62" stroke-width="0.85" /><line x1="433.6" y1="355.4" x2="509.5" y2="378.3" stroke="#363A40" stroke-width="4.2" stroke-linecap="square"/><line x1="433.6" y1="355.4" x2="509.5" y2="378.3" stroke="#94A23C" stroke-width="1.7" /><line x1="433.6" y1="355.1" x2="509.5" y2="377.9" stroke="#CEDB62" stroke-width="0.85" /><line x1="445.3" y1="347.5" x2="521.1" y2="370.4" stroke="#363A40" stroke-width="4.2" stroke-linecap="square"/><line x1="445.3" y1="347.5" x2="521.1" y2="370.4" stroke="#94A23C" stroke-width="1.7" /><line x1="445.3" y1="347.1" x2="521.1" y2="370.0" stroke="#CEDB62" stroke-width="0.85" /><line x1="457.0" y1="339.5" x2="532.8" y2="362.4" stroke="#363A40" stroke-width="4.2" stroke-linecap="square"/><line x1="457.0" y1="339.5" x2="532.8" y2="362.4" stroke="#94A23C" stroke-width="1.7" /><line x1="457.0" y1="339.1" x2="532.8" y2="362.0" stroke="#CEDB62" stroke-width="0.85" /><line x1="468.7" y1="331.5" x2="544.5" y2="354.5" stroke="#363A40" stroke-width="4.2" stroke-linecap="square"/><line x1="468.7" y1="331.5" x2="544.5" y2="354.5" stroke="#94A23C" stroke-width="1.7" /><line x1="468.7" y1="331.1" x2="544.5" y2="354.1" stroke="#CEDB62" stroke-width="0.85" /><line x1="527.3" y1="291.6" x2="602.7" y2="314.8" stroke="#363A40" stroke-width="4.8" stroke-linecap="square"/><line x1="527.3" y1="291.6" x2="602.7" y2="314.8" stroke="#94A23C" stroke-width="2.3" /><line x1="527.3" y1="291.1" x2="602.7" y2="314.3" stroke="#CEDB62" stroke-width="1.15" /><line x1="475.7" y1="326.7" x2="551.4" y2="349.7" stroke="#3E4230" stroke-width="2.0" /><line x1="475.7" y1="326.0" x2="551.4" y2="349.0" stroke="#9AA850" stroke-width="0.7" /><line x1="482.8" y1="321.9" x2="558.4" y2="344.9" stroke="#3E4230" stroke-width="2.0" /><line x1="482.8" y1="321.2" x2="558.4" y2="344.2" stroke="#9AA850" stroke-width="0.7" /><line x1="489.8" y1="317.2" x2="565.4" y2="340.2" stroke="#3E4230" stroke-width="2.0" /><line x1="489.8" y1="316.5" x2="565.4" y2="339.5" stroke="#9AA850" stroke-width="0.7" /><line x1="496.8" y1="312.4" x2="572.4" y2="335.4" stroke="#3E4230" stroke-width="2.0" /><line x1="496.8" y1="311.7" x2="572.4" y2="334.7" stroke="#9AA850" stroke-width="0.7" /><line x1="503.8" y1="307.6" x2="579.4" y2="330.7" stroke="#3E4230" stroke-width="2.0" /><line x1="503.8" y1="306.9" x2="579.4" y2="330.0" stroke="#9AA850" stroke-width="0.7" /><line x1="510.9" y1="302.8" x2="586.4" y2="325.9" stroke="#3E4230" stroke-width="2.0" /><line x1="510.9" y1="302.1" x2="586.4" y2="325.2" stroke="#9AA850" stroke-width="0.7" /><line x1="517.9" y1="298.0" x2="593.4" y2="321.1" stroke="#3E4230" stroke-width="2.0" /><line x1="517.9" y1="297.3" x2="593.4" y2="320.4" stroke="#9AA850" stroke-width="0.7" /><line x1="524.9" y1="293.2" x2="600.4" y2="316.4" stroke="#3E4230" stroke-width="2.0" /><line x1="524.9" y1="292.5" x2="600.4" y2="315.7" stroke="#9AA850" stroke-width="0.7" /><line x1="200.8" y1="297.0" x2="295.8" y2="232.4" stroke="#4A4D5C" stroke-width="1.1" /><line x1="226.4" y1="304.7" x2="321.2" y2="240.2" stroke="#4A4D5C" stroke-width="1.1" /><line x1="252.0" y1="312.4" x2="346.7" y2="248.0" stroke="#4A4D5C" stroke-width="1.1" /><line x1="350.2" y1="341.9" x2="444.3" y2="277.8" stroke="#4A4D5C" stroke-width="1.1" /><line x1="377.9" y1="350.2" x2="471.9" y2="286.2" stroke="#4A4D5C" stroke-width="1.1" /><line x1="407.8" y1="359.2" x2="501.6" y2="295.3" stroke="#4A4D5C" stroke-width="1.1" /><line x1="512.3" y1="390.6" x2="605.5" y2="327.1" stroke="#4A4D5C" stroke-width="1.1" /><line x1="540.1" y1="398.9" x2="633.1" y2="335.6" stroke="#4A4D5C" stroke-width="1.1" /><line x1="567.8" y1="407.3" x2="660.7" y2="344.0" stroke="#4A4D5C" stroke-width="1.1" /><line x1="213.6" y1="300.8" x2="308.5" y2="236.3" stroke="#363A40" stroke-width="4.5" stroke-linecap="square"/><line x1="213.6" y1="300.8" x2="308.5" y2="236.3" stroke="#94A23C" stroke-width="2.0" /><line x1="213.6" y1="300.4" x2="308.5" y2="235.8" stroke="#CEDB62" stroke-width="1.0" /><line x1="239.2" y1="308.5" x2="334.0" y2="244.1" stroke="#363A40" stroke-width="4.5" stroke-linecap="square"/><line x1="239.2" y1="308.5" x2="334.0" y2="244.1" stroke="#94A23C" stroke-width="2.0" /><line x1="239.2" y1="308.1" x2="334.0" y2="243.6" stroke="#CEDB62" stroke-width="1.0" /><line x1="363.0" y1="345.7" x2="457.0" y2="281.7" stroke="#363A40" stroke-width="4.5" stroke-linecap="square"/><line x1="363.0" y1="345.7" x2="457.0" y2="281.7" stroke="#94A23C" stroke-width="2.0" /><line x1="363.0" y1="345.3" x2="457.0" y2="281.3" stroke="#CEDB62" stroke-width="1.0" /><line x1="392.9" y1="354.7" x2="486.7" y2="290.8" stroke="#363A40" stroke-width="4.5" stroke-linecap="square"/><line x1="392.9" y1="354.7" x2="486.7" y2="290.8" stroke="#94A23C" stroke-width="2.0" /><line x1="392.9" y1="354.3" x2="486.7" y2="290.3" stroke="#CEDB62" stroke-width="1.0" /><line x1="525.1" y1="394.4" x2="618.2" y2="331.0" stroke="#363A40" stroke-width="4.5" stroke-linecap="square"/><line x1="525.1" y1="394.4" x2="618.2" y2="331.0" stroke="#94A23C" stroke-width="2.0" /><line x1="525.1" y1="394.0" x2="618.2" y2="330.6" stroke="#CEDB62" stroke-width="1.0" /><line x1="552.9" y1="402.8" x2="645.8" y2="339.5" stroke="#363A40" stroke-width="4.5" stroke-linecap="square"/><line x1="552.9" y1="402.8" x2="645.8" y2="339.5" stroke="#94A23C" stroke-width="2.0" /><line x1="552.9" y1="402.3" x2="645.8" y2="339.0" stroke="#CEDB62" stroke-width="1.0" /><line x1="288.5" y1="334.9" x2="406.4" y2="254.6" stroke="#363A40" stroke-width="4.3" stroke-linecap="square"/><line x1="288.5" y1="334.9" x2="406.4" y2="254.6" stroke="#94A23C" stroke-width="1.8" /><line x1="288.5" y1="334.5" x2="406.4" y2="254.2" stroke="#CEDB62" stroke-width="0.9" /><line x1="448.2" y1="382.8" x2="565.0" y2="303.2" stroke="#363A40" stroke-width="4.3" stroke-linecap="square"/><line x1="448.2" y1="382.8" x2="565.0" y2="303.2" stroke="#94A23C" stroke-width="1.8" /><line x1="448.2" y1="382.4" x2="565.0" y2="302.8" stroke="#CEDB62" stroke-width="0.9" /><line x1="142.0" y1="291.0" x2="261.0" y2="210.0" stroke="#363A40" stroke-width="4.9" stroke-linecap="square"/><line x1="142.0" y1="291.0" x2="261.0" y2="210.0" stroke="#94A23C" stroke-width="2.4" /><line x1="142.0" y1="290.5" x2="261.0" y2="209.5" stroke="#CEDB62" stroke-width="1.2" /><line x1="174.9" y1="300.9" x2="293.6" y2="220.0" stroke="#363A40" stroke-width="4.9" stroke-linecap="square"/><line x1="174.9" y1="300.9" x2="293.6" y2="220.0" stroke="#94A23C" stroke-width="2.4" /><line x1="174.9" y1="300.3" x2="293.6" y2="219.5" stroke="#CEDB62" stroke-width="1.2" /><line x1="253.9" y1="324.5" x2="372.1" y2="244.1" stroke="#363A40" stroke-width="4.9" stroke-linecap="square"/><line x1="253.9" y1="324.5" x2="372.1" y2="244.1" stroke="#94A23C" stroke-width="2.4" /><line x1="253.9" y1="324.0" x2="372.1" y2="243.5" stroke="#CEDB62" stroke-width="1.2" /><line x1="323.0" y1="345.3" x2="440.8" y2="265.1" stroke="#363A40" stroke-width="4.9" stroke-linecap="square"/><line x1="323.0" y1="345.3" x2="440.8" y2="265.1" stroke="#94A23C" stroke-width="2.4" /><line x1="323.0" y1="344.7" x2="440.8" y2="264.6" stroke="#CEDB62" stroke-width="1.2" /><line x1="410.2" y1="371.4" x2="527.3" y2="291.6" stroke="#363A40" stroke-width="4.9" stroke-linecap="square"/><line x1="410.2" y1="371.4" x2="527.3" y2="291.6" stroke="#94A23C" stroke-width="2.4" /><line x1="410.2" y1="370.9" x2="527.3" y2="291.1" stroke="#CEDB62" stroke-width="1.2" /><line x1="486.2" y1="394.2" x2="602.7" y2="314.8" stroke="#363A40" stroke-width="4.9" stroke-linecap="square"/><line x1="486.2" y1="394.2" x2="602.7" y2="314.8" stroke="#94A23C" stroke-width="2.4" /><line x1="486.2" y1="393.6" x2="602.7" y2="314.3" stroke="#CEDB62" stroke-width="1.2" /><line x1="569.0" y1="419.0" x2="685.0" y2="340.0" stroke="#363A40" stroke-width="4.9" stroke-linecap="square"/><line x1="569.0" y1="419.0" x2="685.0" y2="340.0" stroke="#94A23C" stroke-width="2.4" /><line x1="569.0" y1="418.5" x2="685.0" y2="339.5" stroke="#CEDB62" stroke-width="1.2" /><line x1="596.0" y1="425.8" x2="796.7" y2="295.8" stroke="#45485A" stroke-width="2.2" /><line x1="596.0" y1="425.3" x2="796.7" y2="295.3" stroke="#8A9A50" stroke-width="0.8" /><line x1="613.0" y1="430.2" x2="810.3" y2="300.2" stroke="#45485A" stroke-width="2.2" /><line x1="613.0" y1="429.7" x2="810.3" y2="299.7" stroke="#8A9A50" stroke-width="0.8" /><line x1="569.0" y1="421.6" x2="640.0" y2="439.6" stroke="#50535E" stroke-width="1.2" stroke-dasharray="3,1.5"/><line x1="569.0" y1="419.0" x2="640.0" y2="437.0" stroke="#363A40" stroke-width="3.9" stroke-linecap="square"/><line x1="569.0" y1="419.0" x2="640.0" y2="437.0" stroke="#94A23C" stroke-width="1.4" /><line x1="569.0" y1="418.7" x2="640.0" y2="436.7" stroke="#CEDB62" stroke-width="0.7" /><line x1="576.9" y1="416.6" x2="647.4" y2="434.6" stroke="#50535E" stroke-width="1.2" stroke-dasharray="3,1.5"/><line x1="576.9" y1="414.0" x2="647.4" y2="432.0" stroke="#363A40" stroke-width="3.9" stroke-linecap="square"/><line x1="576.9" y1="414.0" x2="647.4" y2="432.0" stroke="#94A23C" stroke-width="1.4" /><line x1="576.9" y1="413.7" x2="647.4" y2="431.7" stroke="#CEDB62" stroke-width="0.7" /><line x1="584.8" y1="411.6" x2="654.8" y2="429.6" stroke="#50535E" stroke-width="1.2" stroke-dasharray="3,1.5"/><line x1="584.8" y1="409.0" x2="654.8" y2="427.0" stroke="#363A40" stroke-width="3.9" stroke-linecap="square"/><line x1="584.8" y1="409.0" x2="654.8" y2="427.0" stroke="#94A23C" stroke-width="1.4" /><line x1="584.8" y1="408.7" x2="654.8" y2="426.7" stroke="#CEDB62" stroke-width="0.7" /><line x1="592.8" y1="406.6" x2="662.2" y2="424.6" stroke="#50535E" stroke-width="1.2" stroke-dasharray="3,1.5"/><line x1="592.8" y1="404.0" x2="662.2" y2="422.0" stroke="#363A40" stroke-width="3.9" stroke-linecap="square"/><line x1="592.8" y1="404.0" x2="662.2" y2="422.0" stroke="#94A23C" stroke-width="1.4" /><line x1="592.8" y1="403.7" x2="662.2" y2="421.7" stroke="#CEDB62" stroke-width="0.7" /><line x1="600.7" y1="401.6" x2="669.5" y2="419.6" stroke="#50535E" stroke-width="1.2" stroke-dasharray="3,1.5"/><line x1="600.7" y1="399.0" x2="669.5" y2="417.0" stroke="#363A40" stroke-width="3.9" stroke-linecap="square"/><line x1="600.7" y1="399.0" x2="669.5" y2="417.0" stroke="#94A23C" stroke-width="1.4" /><line x1="600.7" y1="398.7" x2="669.5" y2="416.7" stroke="#CEDB62" stroke-width="0.7" /><line x1="608.6" y1="396.6" x2="676.9" y2="414.6" stroke="#50535E" stroke-width="1.2" stroke-dasharray="3,1.5"/><line x1="608.6" y1="394.0" x2="676.9" y2="412.0" stroke="#363A40" stroke-width="3.9" stroke-linecap="square"/><line x1="608.6" y1="394.0" x2="676.9" y2="412.0" stroke="#94A23C" stroke-width="1.4" /><line x1="608.6" y1="393.7" x2="676.9" y2="411.7" stroke="#CEDB62" stroke-width="0.7" /><line x1="616.5" y1="391.6" x2="684.3" y2="409.6" stroke="#50535E" stroke-width="1.2" stroke-dasharray="3,1.5"/><line x1="616.5" y1="389.0" x2="684.3" y2="407.0" stroke="#363A40" stroke-width="3.9" stroke-linecap="square"/><line x1="616.5" y1="389.0" x2="684.3" y2="407.0" stroke="#94A23C" stroke-width="1.4" /><line x1="616.5" y1="388.7" x2="684.3" y2="406.7" stroke="#CEDB62" stroke-width="0.7" /><line x1="624.5" y1="386.6" x2="691.7" y2="404.6" stroke="#50535E" stroke-width="1.2" stroke-dasharray="3,1.5"/><line x1="624.5" y1="384.0" x2="691.7" y2="402.0" stroke="#363A40" stroke-width="3.9" stroke-linecap="square"/><line x1="624.5" y1="384.0" x2="691.7" y2="402.0" stroke="#94A23C" stroke-width="1.4" /><line x1="624.5" y1="383.7" x2="691.7" y2="401.7" stroke="#CEDB62" stroke-width="0.7" /><line x1="632.4" y1="381.6" x2="699.1" y2="399.6" stroke="#50535E" stroke-width="1.2" stroke-dasharray="3,1.5"/><line x1="632.4" y1="379.0" x2="699.1" y2="397.0" stroke="#363A40" stroke-width="3.9" stroke-linecap="square"/><line x1="632.4" y1="379.0" x2="699.1" y2="397.0" stroke="#94A23C" stroke-width="1.4" /><line x1="632.4" y1="378.7" x2="699.1" y2="396.7" stroke="#CEDB62" stroke-width="0.7" /><line x1="640.3" y1="376.6" x2="706.5" y2="394.6" stroke="#50535E" stroke-width="1.2" stroke-dasharray="3,1.5"/><line x1="640.3" y1="374.0" x2="706.5" y2="392.0" stroke="#363A40" stroke-width="3.9" stroke-linecap="square"/><line x1="640.3" y1="374.0" x2="706.5" y2="392.0" stroke="#94A23C" stroke-width="1.4" /><line x1="640.3" y1="373.7" x2="706.5" y2="391.7" stroke="#CEDB62" stroke-width="0.7" /><line x1="648.2" y1="371.6" x2="713.8" y2="389.6" stroke="#50535E" stroke-width="1.2" stroke-dasharray="3,1.5"/><line x1="648.2" y1="369.0" x2="713.8" y2="387.0" stroke="#363A40" stroke-width="3.9" stroke-linecap="square"/><line x1="648.2" y1="369.0" x2="713.8" y2="387.0" stroke="#94A23C" stroke-width="1.4" /><line x1="648.2" y1="368.7" x2="713.8" y2="386.7" stroke="#CEDB62" stroke-width="0.7" /><line x1="656.2" y1="366.6" x2="721.2" y2="384.6" stroke="#50535E" stroke-width="1.2" stroke-dasharray="3,1.5"/><line x1="656.2" y1="364.0" x2="721.2" y2="382.0" stroke="#363A40" stroke-width="3.9" stroke-linecap="square"/><line x1="656.2" y1="364.0" x2="721.2" y2="382.0" stroke="#94A23C" stroke-width="1.4" /><line x1="656.2" y1="363.7" x2="721.2" y2="381.7" stroke="#CEDB62" stroke-width="0.7" /><line x1="664.1" y1="361.6" x2="728.6" y2="379.6" stroke="#50535E" stroke-width="1.2" stroke-dasharray="3,1.5"/><line x1="664.1" y1="359.0" x2="728.6" y2="377.0" stroke="#363A40" stroke-width="3.9" stroke-linecap="square"/><line x1="664.1" y1="359.0" x2="728.6" y2="377.0" stroke="#94A23C" stroke-width="1.4" /><line x1="664.1" y1="358.7" x2="728.6" y2="376.7" stroke="#CEDB62" stroke-width="0.7" /><line x1="672.0" y1="356.6" x2="736.0" y2="374.6" stroke="#50535E" stroke-width="1.2" stroke-dasharray="3,1.5"/><line x1="672.0" y1="354.0" x2="736.0" y2="372.0" stroke="#363A40" stroke-width="3.9" stroke-linecap="square"/><line x1="672.0" y1="354.0" x2="736.0" y2="372.0" stroke="#94A23C" stroke-width="1.4" /><line x1="672.0" y1="353.7" x2="736.0" y2="371.7" stroke="#CEDB62" stroke-width="0.7" /><line x1="679.9" y1="351.6" x2="743.4" y2="369.6" stroke="#50535E" stroke-width="1.2" stroke-dasharray="3,1.5"/><line x1="679.9" y1="349.0" x2="743.4" y2="367.0" stroke="#363A40" stroke-width="3.9" stroke-linecap="square"/><line x1="679.9" y1="349.0" x2="743.4" y2="367.0" stroke="#94A23C" stroke-width="1.4" /><line x1="679.9" y1="348.7" x2="743.4" y2="366.7" stroke="#CEDB62" stroke-width="0.7" /><line x1="687.8" y1="346.6" x2="750.8" y2="364.6" stroke="#50535E" stroke-width="1.2" stroke-dasharray="3,1.5"/><line x1="687.8" y1="344.0" x2="750.8" y2="362.0" stroke="#363A40" stroke-width="3.9" stroke-linecap="square"/><line x1="687.8" y1="344.0" x2="750.8" y2="362.0" stroke="#94A23C" stroke-width="1.4" /><line x1="687.8" y1="343.7" x2="750.8" y2="361.7" stroke="#CEDB62" stroke-width="0.7" /><line x1="695.8" y1="341.6" x2="758.2" y2="359.6" stroke="#50535E" stroke-width="1.2" stroke-dasharray="3,1.5"/><line x1="695.8" y1="339.0" x2="758.2" y2="357.0" stroke="#363A40" stroke-width="3.9" stroke-linecap="square"/><line x1="695.8" y1="339.0" x2="758.2" y2="357.0" stroke="#94A23C" stroke-width="1.4" /><line x1="695.8" y1="338.7" x2="758.2" y2="356.7" stroke="#CEDB62" stroke-width="0.7" /><line x1="703.7" y1="336.6" x2="765.5" y2="354.6" stroke="#50535E" stroke-width="1.2" stroke-dasharray="3,1.5"/><line x1="703.7" y1="334.0" x2="765.5" y2="352.0" stroke="#363A40" stroke-width="3.9" stroke-linecap="square"/><line x1="703.7" y1="334.0" x2="765.5" y2="352.0" stroke="#94A23C" stroke-width="1.4" /><line x1="703.7" y1="333.7" x2="765.5" y2="351.7" stroke="#CEDB62" stroke-width="0.7" /><line x1="711.6" y1="331.6" x2="772.9" y2="349.6" stroke="#50535E" stroke-width="1.2" stroke-dasharray="3,1.5"/><line x1="711.6" y1="329.0" x2="772.9" y2="347.0" stroke="#363A40" stroke-width="3.9" stroke-linecap="square"/><line x1="711.6" y1="329.0" x2="772.9" y2="347.0" stroke="#94A23C" stroke-width="1.4" /><line x1="711.6" y1="328.7" x2="772.9" y2="346.7" stroke="#CEDB62" stroke-width="0.7" /><line x1="719.5" y1="326.6" x2="780.3" y2="344.6" stroke="#50535E" stroke-width="1.2" stroke-dasharray="3,1.5"/><line x1="719.5" y1="324.0" x2="780.3" y2="342.0" stroke="#363A40" stroke-width="3.9" stroke-linecap="square"/><line x1="719.5" y1="324.0" x2="780.3" y2="342.0" stroke="#94A23C" stroke-width="1.4" /><line x1="719.5" y1="323.7" x2="780.3" y2="341.7" stroke="#CEDB62" stroke-width="0.7" /><line x1="727.5" y1="321.6" x2="787.7" y2="339.6" stroke="#50535E" stroke-width="1.2" stroke-dasharray="3,1.5"/><line x1="727.5" y1="319.0" x2="787.7" y2="337.0" stroke="#363A40" stroke-width="3.9" stroke-linecap="square"/><line x1="727.5" y1="319.0" x2="787.7" y2="337.0" stroke="#94A23C" stroke-width="1.4" /><line x1="727.5" y1="318.7" x2="787.7" y2="336.7" stroke="#CEDB62" stroke-width="0.7" /><line x1="735.4" y1="316.6" x2="795.1" y2="334.6" stroke="#50535E" stroke-width="1.2" stroke-dasharray="3,1.5"/><line x1="735.4" y1="314.0" x2="795.1" y2="332.0" stroke="#363A40" stroke-width="3.9" stroke-linecap="square"/><line x1="735.4" y1="314.0" x2="795.1" y2="332.0" stroke="#94A23C" stroke-width="1.4" /><line x1="735.4" y1="313.7" x2="795.1" y2="331.7" stroke="#CEDB62" stroke-width="0.7" /><line x1="743.3" y1="311.6" x2="802.5" y2="329.6" stroke="#50535E" stroke-width="1.2" stroke-dasharray="3,1.5"/><line x1="743.3" y1="309.0" x2="802.5" y2="327.0" stroke="#363A40" stroke-width="3.9" stroke-linecap="square"/><line x1="743.3" y1="309.0" x2="802.5" y2="327.0" stroke="#94A23C" stroke-width="1.4" /><line x1="743.3" y1="308.7" x2="802.5" y2="326.7" stroke="#CEDB62" stroke-width="0.7" /><line x1="751.2" y1="306.6" x2="809.8" y2="324.6" stroke="#50535E" stroke-width="1.2" stroke-dasharray="3,1.5"/><line x1="751.2" y1="304.0" x2="809.8" y2="322.0" stroke="#363A40" stroke-width="3.9" stroke-linecap="square"/><line x1="751.2" y1="304.0" x2="809.8" y2="322.0" stroke="#94A23C" stroke-width="1.4" /><line x1="751.2" y1="303.7" x2="809.8" y2="321.7" stroke="#CEDB62" stroke-width="0.7" /><line x1="759.2" y1="301.6" x2="817.2" y2="319.6" stroke="#50535E" stroke-width="1.2" stroke-dasharray="3,1.5"/><line x1="759.2" y1="299.0" x2="817.2" y2="317.0" stroke="#363A40" stroke-width="3.9" stroke-linecap="square"/><line x1="759.2" y1="299.0" x2="817.2" y2="317.0" stroke="#94A23C" stroke-width="1.4" /><line x1="759.2" y1="298.7" x2="817.2" y2="316.7" stroke="#CEDB62" stroke-width="0.7" /><line x1="767.1" y1="296.6" x2="824.6" y2="314.6" stroke="#50535E" stroke-width="1.2" stroke-dasharray="3,1.5"/><line x1="767.1" y1="294.0" x2="824.6" y2="312.0" stroke="#363A40" stroke-width="3.9" stroke-linecap="square"/><line x1="767.1" y1="294.0" x2="824.6" y2="312.0" stroke="#94A23C" stroke-width="1.4" /><line x1="767.1" y1="293.7" x2="824.6" y2="311.7" stroke="#CEDB62" stroke-width="0.7" /><line x1="775.0" y1="291.6" x2="832.0" y2="309.6" stroke="#50535E" stroke-width="1.2" stroke-dasharray="3,1.5"/><line x1="775.0" y1="289.0" x2="832.0" y2="307.0" stroke="#363A40" stroke-width="3.9" stroke-linecap="square"/><line x1="775.0" y1="289.0" x2="832.0" y2="307.0" stroke="#94A23C" stroke-width="1.4" /><line x1="775.0" y1="288.7" x2="832.0" y2="306.7" stroke="#CEDB62" stroke-width="0.7" /><line x1="569.0" y1="419.0" x2="775.0" y2="289.0" stroke="#363A40" stroke-width="4.6" stroke-linecap="square"/><line x1="569.0" y1="419.0" x2="775.0" y2="289.0" stroke="#94A23C" stroke-width="2.1" /><line x1="569.0" y1="418.5" x2="775.0" y2="288.5" stroke="#CEDB62" stroke-width="1.05" /><line x1="640.0" y1="437.0" x2="832.0" y2="307.0" stroke="#363A40" stroke-width="4.6" stroke-linecap="square"/><line x1="640.0" y1="437.0" x2="832.0" y2="307.0" stroke="#94A23C" stroke-width="2.1" /><line x1="640.0" y1="436.5" x2="832.0" y2="306.5" stroke="#CEDB62" stroke-width="1.05" /><line x1="569.0" y1="419.0" x2="640.0" y2="437.0" stroke="#363A40" stroke-width="4.9" stroke-linecap="square"/><line x1="569.0" y1="419.0" x2="640.0" y2="437.0" stroke="#94A23C" stroke-width="2.4" /><line x1="569.0" y1="418.5" x2="640.0" y2="436.5" stroke="#CEDB62" stroke-width="1.2" /><line x1="775.0" y1="289.0" x2="832.0" y2="307.0" stroke="#363A40" stroke-width="4.9" stroke-linecap="square"/><line x1="775.0" y1="289.0" x2="832.0" y2="307.0" stroke="#94A23C" stroke-width="2.4" /><line x1="775.0" y1="288.5" x2="832.0" y2="306.5" stroke="#CEDB62" stroke-width="1.2" /><g fill="none" stroke-linecap="round"><path d="M147.5,325 L166,318 M161.5,316.5 L166,318 L172,321" stroke="#30D040" stroke-width="1.3"/><path d="M146,332.5 L162.5,326 M159,324 L162.5,326 L165,330" stroke="#30D040" stroke-width="1.3"/><path d="M145,338 L167,342.5 L166,340.5 L170,344 L162,346 L164,344.5 L146,340" stroke="#E03030" stroke-width="1.1"/><path d="M170,348 L188,345.5 M179.4,344.5 V352" stroke="#E81818" stroke-width="1.6"/></g></svg>
<svg class="a" style="left:130px;top:545px" width="40" height="40" viewBox="0 0 40 40"><path d="M9.5,21.5V3" stroke="#3030B0" stroke-width="1.3"/><path d="M9.5,21.5l11.5-8.5" stroke="#50C050" stroke-width="1"/><path d="M9.5,21.5l17.5,6" stroke="#C03050" stroke-width="1.2"/><text x="11" y="9" font-size="6.5" font-weight="bold" fill="#3030B0" font-family="Liberation Sans">Z</text><text x="22.5" y="18" font-size="6" fill="#50C050" font-family="Liberation Sans">Y</text><text x="28.5" y="33" font-size="6" fill="#C03050" font-family="Liberation Sans">X</text></svg>
<div class="a" style="left:110.5px;top:76px;width:72px;height:107px;background:#ECE9D8;border:1px solid #8A8A80;border-right:2px solid #707068;border-bottom:2px solid #707068"></div>
<div class="a" style="left:113px;top:78px;width:67px;height:14px;background:#1E5ED8"></div>
<div class="a t" style="left:114.5px;top:80.5px;font-size:8.5px;font-weight:bold;color:#fff">Ansicht</div>
<svg class="a" style="left:156px;top:82px" width="8" height="5" viewBox="0 0 8 5"><path d="M0,0h8l-4,5z" fill="#fff"/></svg>
<svg class="a" style="left:170px;top:80px" width="9" height="9" viewBox="0 0 9 9"><path d="M1,1l7,7M8,1l-7,7" stroke="#fff" stroke-width="1.5"/></svg>
<svg class="a" style="left:117.0px;top:95px" width="12" height="12" viewBox="0 0 12 12"><path d="M1,8l5-3l5,3l-5,3z" fill="#40B0A0" stroke="#205050" stroke-width="0.8"/><path d="M1,8v1.5l5,3l5-3V8" fill="#207070" stroke="#205050" stroke-width="0.8"/><path d="M6,0v6" stroke="#D02020" stroke-width="1.2"/><text x="0" y="4.5" font-size="4.5" font-weight="bold" fill="#333" font-family="Liberation Sans">X</text></svg>
<svg class="a" style="left:133.7px;top:95px" width="12" height="12" viewBox="0 0 12 12"><path d="M1,8l5-3l5,3l-5,3z" fill="#40B0A0" stroke="#205050" stroke-width="0.8"/><path d="M1,8v1.5l5,3l5-3V8" fill="#207070" stroke="#205050" stroke-width="0.8"/><path d="M6,0v6" stroke="#D02020" stroke-width="1.2"/><text x="0" y="4.5" font-size="4.5" font-weight="bold" fill="#333" font-family="Liberation Sans">Y</text></svg>
<svg class="a" style="left:150.4px;top:95px" width="12" height="12" viewBox="0 0 12 12"><path d="M1,8l5-3l5,3l-5,3z" fill="#40B0A0" stroke="#205050" stroke-width="0.8"/><path d="M1,8v1.5l5,3l5-3V8" fill="#207070" stroke="#205050" stroke-width="0.8"/><path d="M6,0v6" stroke="#D02020" stroke-width="1.2"/><text x="0" y="4.5" font-size="4.5" font-weight="bold" fill="#333" font-family="Liberation Sans">Z</text></svg>
<svg class="a" style="left:167.1px;top:95px" width="12" height="12" viewBox="0 0 12 12"><path d="M1,8l5-3l5,3l-5,3z" fill="#40B0A0" stroke="#205050" stroke-width="0.8"/><path d="M1,8v1.5l5,3l5-3V8" fill="#207070" stroke="#205050" stroke-width="0.8"/><path d="M6,0v6" stroke="#D02020" stroke-width="1.2"/><text x="0" y="4.5" font-size="4.5" font-weight="bold" fill="#333" font-family="Liberation Sans"></text></svg>
<svg class="a" style="left:117px;top:112px" width="12" height="12" viewBox="0 0 12 12"><path d="M3,1v9h8" stroke="#D02020" stroke-width="1.2" fill="none"/><path d="M3,1v7" stroke="#2030A0" stroke-width="1.5"/><path d="M4,9l7-2" stroke="#D02020" stroke-width="1.5"/></svg>
<svg class="a" style="left:134.0px;top:112px" width="12" height="12" viewBox="0 0 12 12"><circle cx="5" cy="5" r="3.8" fill="#C8E8F0" stroke="#333" stroke-width="1.1"/><path d="M7.5,7.5l3.5,3.5" stroke="#000" stroke-width="1.8"/><path d="M1,10.5h3M2.5,9v3" stroke="#000" stroke-width="0.8"/></svg>
<svg class="a" style="left:150.7px;top:112px" width="12" height="12" viewBox="0 0 12 12"><circle cx="5" cy="5" r="3.8" fill="#C8E8F0" stroke="#333" stroke-width="1.1"/><path d="M7.5,7.5l3.5,3.5" stroke="#000" stroke-width="1.8"/><path d="M1,10.5h3M2.5,9v3" stroke="#000" stroke-width="0.8"/></svg>
<svg class="a" style="left:167.4px;top:112px" width="12" height="12" viewBox="0 0 12 12"><circle cx="5" cy="5" r="3.8" fill="#C8E8F0" stroke="#333" stroke-width="1.1"/><path d="M7.5,7.5l3.5,3.5" stroke="#000" stroke-width="1.8"/><path d="M1,10.5h3M2.5,9v3" stroke="#000" stroke-width="0.8"/></svg>
<svg class="a" style="left:117px;top:131px" width="12" height="12" viewBox="0 0 12 12"><circle cx="5.5" cy="5" r="3.8" fill="#C8E8F0" stroke="#333" stroke-width="1.1"/><path d="M8,7.5l3.5,3.5" stroke="#000" stroke-width="1.8"/><path d="M1,11h6" stroke="#000" stroke-width="0.8"/></svg>
<svg class="a" style="left:134px;top:131px" width="12" height="12" viewBox="0 0 12 12"><circle cx="5.5" cy="5" r="3.8" fill="none" stroke="#B8B6AC" stroke-width="1.1"/><path d="M8,7.5l3.5,3.5" stroke="#B8B6AC" stroke-width="1.8"/></svg>
<svg class="a" style="left:150px;top:131px" width="12" height="12" viewBox="0 0 12 12"><path d="M1,6l5-2h5.5v6l-5,1.5h-5.5z" fill="#E8E040" stroke="#333" stroke-width="0.8"/><path d="M1,6h5.5v5.5M6.5,6l5-2" fill="none" stroke="#333" stroke-width="0.8"/><path d="M3,0v4M1,2h4" stroke="#2040C0"/></svg>
<svg class="a" style="left:167px;top:131px" width="12" height="12" viewBox="0 0 12 12"><circle cx="6" cy="4.5" r="3.5" fill="#F4E830" stroke="#555" stroke-width="0.8"/><rect x="4" y="8" width="4" height="3" fill="#888"/></svg>
<div class="a" style="left:114px;top:145px;width:66px;height:1px;background:#ACA899;border-bottom:1px solid #fff"></div>
<svg class="a" style="left:117px;top:150px" width="13" height="12" viewBox="0 0 13 12"><rect x="0.5" y="4.5" width="9" height="6" fill="#902020" stroke="#333" stroke-width="0.8"/><rect x="2" y="6" width="6" height="3" fill="#C0C0C0"/><path d="M6,3q3-3 6,0" stroke="#2040C0" fill="none"/></svg>
<svg class="a" style="left:134px;top:150px" width="13" height="12" viewBox="0 0 13 12"><rect x="0.5" y="4.5" width="9" height="6" fill="#DCDAD0" stroke="#B8B6AC" stroke-width="0.8"/><path d="M6,3q3-3 6,0" stroke="#B8B6AC" fill="none"/></svg>
<div class="a" style="left:151px;top:148px;width:1px;height:15px;background:#ACA899;border-right:1px solid #fff"></div>
<svg class="a" style="left:156px;top:149px" width="12" height="13" viewBox="0 0 12 13"><rect x="0.5" y="0.5" width="11" height="12" fill="#D8D840" stroke="#333" stroke-width="1.1"/><path d="M8,3.5h-4.5v6h4.5" fill="none" stroke="#333" stroke-width="1.4"/></svg>
<svg class="a" style="left:117px;top:168px" width="12" height="11" viewBox="0 0 12 11"><path d="M0.5,3.5l3-3h8v7l-3,3h-8z" fill="#2838A8" stroke="#111" stroke-width="0.8"/><rect x="2" y="4" width="5" height="5.5" fill="#fff"/><path d="M3,9l3-5" stroke="#111"/></svg>
<div class="a" style="left:869px;top:75px;width:15px;height:523px;background:linear-gradient(90deg,#F0EFE8,#F7F6F0 50%,#FBFBF8)"></div>
<div class="a" style="left:870px;top:77px;width:13px;height:12px;background:#C3D3F8;border:1px solid #B0C4EE;border-radius:2px"></div>
<svg class="a" style="left:873px;top:80px" width="7" height="5" viewBox="0 0 7 5"><path d="M0.5,4.5l3-3l3,3" stroke="#2A4AA0" stroke-width="1.5" fill="none"/></svg>
<div class="a" style="left:870px;top:255px;width:13px;height:13px;background:#C3D3F8;border:1px solid #AFC2EC;border-radius:2px"></div>
<div class="a" style="left:872px;top:259px;width:9px;height:5px;border-top:1px solid #fff;border-bottom:1px solid #fff"></div>
<div class="a" style="left:870px;top:495px;width:13px;height:12px;background:#C3D3F8;border:1px solid #B0C4EE;border-radius:2px"></div>
<svg class="a" style="left:873px;top:499px" width="7" height="5" viewBox="0 0 7 5"><path d="M0.5,0.5l3,3l3-3" stroke="#2A4AA0" stroke-width="1.5" fill="none"/></svg>
<div class="a" style="left:870px;top:509px;width:14px;height:88px;background:repeating-linear-gradient(#555 0,#6A6A6A 1.5px,#3E3E3E 3px);border:1px solid #2A2A2A;outline:1px solid #9A9A90"></div>
<div class="a" style="left:108px;top:598px;width:776px;height:15px;background:#ECE9D8"></div>
<div class="a" style="left:111px;top:598.5px;width:16px;height:14px;background:#E6E3D2;border:1px solid;border-color:#fff #ACA899 #ACA899 #fff"></div>
<svg class="a" style="left:113px;top:599.5px" width="12.0" height="12.0" viewBox="0 0 12 12"><path d="M1,4l3-3h6v6l-3,3h-6z" fill="#fff" stroke="#222"/><path d="M1,4h6v6M7,4l3-3" fill="none" stroke="#222"/></svg>
<div class="a" style="left:128px;top:598.5px;width:16px;height:14px;background:#E6E3D2;border:1px solid;border-color:#fff #ACA899 #ACA899 #fff"></div>
<svg class="a" style="left:130px;top:599.5px" width="12.0" height="12.0" viewBox="0 0 12 12"><path d="M1,4l3-3h6v6l-3,3h-6z" fill="#E0E020" stroke="#222"/><path d="M1,4h6v6M7,4l3-3" fill="none" stroke="#222"/></svg>
<div class="a" style="left:146px;top:598.5px;width:16px;height:14px;background:#ECE9D8;border:1px solid;border-color:#fff #ACA899 #ACA899 #fff"></div>
<svg class="a" style="left:148px;top:599.5px" width="12.0" height="12.0" viewBox="0 0 12 12"><path d="M6,2l4,6h-8z" fill="#3040C0"/><rect x="1" y="8" width="10" height="3" fill="#E0E020"/></svg>
<div class="a" style="left:162.5px;top:598.5px;width:16px;height:14px;background:#ECE9D8;border:1px solid;border-color:#fff #ACA899 #ACA899 #fff"></div>
<svg class="a" style="left:164.5px;top:599.5px" width="12.0" height="12.0" viewBox="0 0 12 12"><path d="M2,1v8M0.5,7l1.5,3l1.5-3" stroke="#2030A0" fill="none"/><path d="M0.5,10.5h11M5,10v-3h2v3M8,10v-5h2v5" stroke="#222" fill="#E0E020"/></svg>
<div class="a" style="left:180px;top:598.5px;width:16px;height:14px;background:#ECE9D8;border:1px solid;border-color:#fff #ACA899 #ACA899 #fff"></div>
<svg class="a" style="left:182px;top:599.5px" width="12.0" height="12.0" viewBox="0 0 12 12"><path d="M1,1v10M1,1h8v4h-8" stroke="#2030A0" fill="#D02020"/><path d="M1,8h9" stroke="#2030A0"/></svg>
<div class="a" style="left:199px;top:598.5px;width:16px;height:14px;background:#ECE9D8;border:1px solid;border-color:#fff #ACA899 #ACA899 #fff"></div>
<svg class="a" style="left:201px;top:599.5px" width="12.0" height="12.0" viewBox="0 0 12 12"><text x="0" y="5" font-size="5" font-weight="bold" fill="#222" font-family="Liberation Sans">ABC</text><path d="M0,8h12" stroke="#2030A0" stroke-width="1.3"/></svg>
<div class="a" style="left:215px;top:598.5px;width:16px;height:14px;background:#ECE9D8;border:1px solid;border-color:#fff #ACA899 #ACA899 #fff"></div>
<svg class="a" style="left:217px;top:599.5px" width="12.0" height="12.0" viewBox="0 0 12 12"><text x="0" y="5" font-size="5" font-weight="bold" fill="#222" font-family="Liberation Sans">ABC</text><rect x="0.5" y="7" width="11" height="4" fill="#E0E020" stroke="#333"/></svg>
<div class="a" style="left:232.5px;top:598.5px;width:16px;height:14px;background:#ECE9D8;border:1px solid;border-color:#fff #ACA899 #ACA899 #fff"></div>
<svg class="a" style="left:234.5px;top:599.5px" width="12.0" height="12.0" viewBox="0 0 12 12"><path d="M1,10l10-8M1,10h10" stroke="#60B060" stroke-dasharray="1,1"/><circle cx="6" cy="3" r="1.5" fill="#D02020"/></svg>
<div class="a" style="left:252.5px;top:598.5px;width:16px;height:14px;background:#ECE9D8;border:1px solid;border-color:#fff #ACA899 #ACA899 #fff"></div>
<svg class="a" style="left:254.5px;top:599.5px" width="12.0" height="12.0" viewBox="0 0 12 12"><path d="M2,1v10M5,1v10M8,1v10" stroke="#222" stroke-width="1.3"/><rect x="9" y="3" width="2.5" height="8" fill="#fff" stroke="#222"/></svg>
<div class="a" style="left:271px;top:598.5px;width:16px;height:14px;background:#ECE9D8;border:1px solid;border-color:#fff #ACA899 #ACA899 #fff"></div>
<svg class="a" style="left:273px;top:599.5px" width="12.0" height="12.0" viewBox="0 0 12 12"><rect x="0.5" y="3.5" width="8" height="8" fill="#E0E020" stroke="#203080"/><rect x="4.5" y="0.5" width="7" height="6" fill="#3050B0" stroke="#203080"/></svg>
<div class="a" style="left:288.5px;top:598.5px;width:16px;height:14px;background:#ECE9D8;border:1px solid;border-color:#fff #ACA899 #ACA899 #fff"></div>
<svg class="a" style="left:290.5px;top:599.5px" width="12.0" height="12.0" viewBox="0 0 12 12"><rect x="0.5" y="3.5" width="8" height="8" fill="#D0CEC2" stroke="#B0AEA2"/><rect x="4.5" y="0.5" width="7" height="6" fill="#C8C6BA"/></svg>
<div class="a" style="left:305px;top:598.5px;width:16px;height:14px;background:#ECE9D8;border:1px solid;border-color:#fff #ACA899 #ACA899 #fff"></div>
<svg class="a" style="left:307px;top:599.5px" width="12.0" height="12.0" viewBox="0 0 12 12"><path d="M1,1h10v10h-10z" fill="#fff" stroke="#D02020"/><path d="M1,4h10M1,7h10M4,1v10M7,1v10" stroke="#D02020"/><path d="M1,11l5-5" stroke="#2030A0" stroke-width="1.5"/></svg>
<div class="a" style="left:321px;top:599px;width:13px;height:13px;background:#C3D3F8;border:1px solid #B0C4EE;border-radius:2px"></div>
<svg class="a" style="left:325px;top:602px" width="6" height="7" viewBox="0 0 6 7"><path d="M4.5,0.5l-3,3l3,3" stroke="#2A4AA0" stroke-width="1.5" fill="none"/></svg>
<div class="a" style="left:334px;top:599px;width:395px;height:13px;background:#F7F6F0"></div>
<div class="a" style="left:516px;top:599px;width:14px;height:13px;background:#C3D3F8;border:1px solid #AFC2EC;border-radius:2px"></div>
<div class="a" style="left:520px;top:602px;width:6px;height:7px;border-left:1px solid #fff;border-right:1px solid #fff"></div>
<div class="a" style="left:716px;top:599px;width:13px;height:13px;background:#C3D3F8;border:1px solid #B0C4EE;border-radius:2px"></div>
<svg class="a" style="left:720px;top:602px" width="6" height="7" viewBox="0 0 6 7"><path d="M1.5,0.5l3,3l-3,3" stroke="#2A4AA0" stroke-width="1.5" fill="none"/></svg>
<div class="a" style="left:731px;top:598px;width:67px;height:15px;background:repeating-linear-gradient(90deg,#4A4A4A 0,#707070 1.5px,#3A3A3A 3px);border:1px solid #222;outline:1px solid #A0A090"></div>
<div class="a" style="left:800px;top:598px;width:69px;height:15px;background:repeating-linear-gradient(90deg,#4A4A4A 0,#707070 1.5px,#3A3A3A 3px);border:1px solid #222;outline:1px solid #A0A090"></div>
<div class="a" style="left:110px;top:617px;width:775px;height:13px;background:#7B9BE1"></div>
<div class="a t" style="left:113px;top:619px;font-size:7.7px;color:#DDE6FA">Befehlszeile</div>
<svg class="a" style="left:862px;top:619px" width="8" height="9" viewBox="0 0 8 9"><path d="M2,1h4v4h-4zM1,5h6M4,5v3" stroke="#fff" fill="none" stroke-width="1.2"/></svg>
<svg class="a" style="left:873px;top:619px" width="9" height="9" viewBox="0 0 9 9"><path d="M1.5,1.5l6,6M7.5,1.5l-6,6" stroke="#fff" stroke-width="1.4"/></svg>
<div class="a" style="left:113px;top:632px;width:18px;height:18px;background:#ECE9D8;border:1px solid;border-color:#fff #C6C3B0 #C6C3B0 #fff"></div>
<svg class="a" style="left:117px;top:635px" width="10" height="12" viewBox="0 0 10 12"><path d="M1,1v9l2.5-2l2,4l1.5-1l-2-4h3z" fill="#F4F3EE" stroke="#B4B2A6"/></svg>
<div class="a" style="left:521px;top:632px;width:363px;height:18px;background:#ECE9D8;border-bottom:1px solid #C6C3B0;border-right:1px solid #C6C3B0;border-radius:2px"></div>
<svg class="a" style="left:524px;top:635px" width="12.0" height="12.0" viewBox="0 0 12 12"><path d="M2,2l8,8" stroke="#B4B2A6" stroke-width="1.2"/><circle cx="2" cy="2" r="1" fill="#B4B2A6"/></svg>
<svg class="a" style="left:541px;top:635px" width="12.0" height="12.0" viewBox="0 0 12 12"><path d="M2,2l8,8" stroke="#B4B2A6" stroke-width="1.2"/><circle cx="2" cy="2" r="1" fill="#B4B2A6"/></svg>
<svg class="a" style="left:558px;top:635px" width="12.0" height="12.0" viewBox="0 0 12 12"><circle cx="6" cy="6" r="3.5" fill="none" stroke="#B4B2A6" stroke-width="1.2"/><path d="M6,6l3,3" stroke="#B4B2A6"/></svg>
<svg class="a" style="left:575px;top:635px" width="12.0" height="12.0" viewBox="0 0 12 12"><path d="M2,2l8,8M10,2l-8,8" stroke="#B4B2A6" stroke-width="1.2"/></svg>
<svg class="a" style="left:597px;top:635px" width="12.0" height="12.0" viewBox="0 0 12 12"><path d="M1,10l5-6l5,6" fill="none" stroke="#B4B2A6" stroke-width="1.2"/></svg>
<svg class="a" style="left:614px;top:635px" width="12.0" height="12.0" viewBox="0 0 12 12"><path d="M2,2l8,8" stroke="#B4B2A6" stroke-width="1.2"/><circle cx="2" cy="2" r="1" fill="#B4B2A6"/></svg>
<svg class="a" style="left:631px;top:635px" width="12.0" height="12.0" viewBox="0 0 12 12"><path d="M1,10l5-6l5,6" fill="none" stroke="#B4B2A6" stroke-width="1.2"/></svg>
<svg class="a" style="left:648px;top:635px" width="12.0" height="12.0" viewBox="0 0 12 12"><path d="M2,2l8,8" stroke="#B4B2A6" stroke-width="1.2"/><circle cx="2" cy="2" r="1" fill="#B4B2A6"/></svg>
<div class="a" style="left:590px;top:634px;width:2px;height:14px;border-left:1px solid #ACA899;border-right:1px solid #fff;"></div>
<div class="a" style="left:662px;top:634px;width:2px;height:14px;border-left:1px solid #ACA899;border-right:1px solid #fff;"></div>
<svg class="a" style="left:668px;top:635px" width="12.0" height="12.0" viewBox="0 0 12 12"><path d="M1,1l9,9" stroke="#D02020" stroke-width="1.3"/><rect x="6" y="0.5" width="5.5" height="4" fill="#ddd" stroke="#2030A0"/><path d="M2,6l4,4" stroke="#2030A0" stroke-width="2"/></svg>
<div class="a" style="left:684px;top:634px;width:2px;height:14px;border-left:1px solid #ACA899;border-right:1px solid #fff;"></div>
<svg class="a" style="left:688px;top:635px" width="12.0" height="12.0" viewBox="0 0 12 12"><path d="M1,4h10M1,7h10M1,10h10" stroke="#222" stroke-dasharray="1.3,1.5" stroke-width="1.3"/><circle cx="3" cy="1.5" r="1.2" fill="#D02020"/></svg>
<svg class="a" style="left:704px;top:635px" width="12.0" height="12.0" viewBox="0 0 12 12"><path d="M1,11h10M5,11v-9" stroke="#333" stroke-width="1.2"/><circle cx="3" cy="2" r="1.2" fill="#D02020"/><path d="M7,11v-4h3" stroke="#2030A0"/></svg>
<svg class="a" style="left:720px;top:635px" width="12.0" height="12.0" viewBox="0 0 12 12"><path d="M1,11l10-10" stroke="#30A030" stroke-width="1.4"/><path d="M1,1l10,10" stroke="#333"/><circle cx="3" cy="2" r="1.2" fill="#D02020"/></svg>
<div class="a" style="left:735px;top:633px;width:16px;height:16px;background:#F6F5EE;border:1px solid;border-color:#ACA899 #fff #fff #ACA899"></div>
<svg class="a" style="left:737px;top:635px" width="12.0" height="12.0" viewBox="0 0 12 12"><path d="M1,1l9,9" stroke="#333" stroke-width="1.2"/><circle cx="2" cy="2" r="1.3" fill="#D02020"/><circle cx="9" cy="9" r="1.6" fill="#D02020"/><path d="M1,5h5" stroke="#333"/></svg>
<div class="a" style="left:751px;top:633px;width:16px;height:16px;background:#F6F5EE;border:1px solid;border-color:#ACA899 #fff #fff #ACA899"></div>
<svg class="a" style="left:753px;top:635px" width="12.0" height="12.0" viewBox="0 0 12 12"><path d="M1,1l9,9" stroke="#333" stroke-width="1.2"/><circle cx="2" cy="2" r="1.3" fill="#D02020"/><circle cx="9" cy="9" r="1.6" fill="#D02020"/><path d="M1,5h5" stroke="#333"/></svg>
<div class="a" style="left:768px;top:633px;width:16px;height:16px;background:#F6F5EE;border:1px solid;border-color:#ACA899 #fff #fff #ACA899"></div>
<svg class="a" style="left:770px;top:635px" width="12.0" height="12.0" viewBox="0 0 12 12"><path d="M2,4l8,7M10,4l-8,7" stroke="#333" stroke-width="1.2"/><circle cx="6" cy="7.5" r="1.5" fill="#D02020"/><path d="M1,1h5" stroke="#D02020"/></svg>
<div class="a" style="left:784px;top:633px;width:16px;height:16px;background:#F6F5EE;border:1px solid;border-color:#ACA899 #fff #fff #ACA899"></div>
<svg class="a" style="left:786px;top:635px" width="12.0" height="12.0" viewBox="0 0 12 12"><path d="M1,3l5,8l5-6" stroke="#333" fill="none" stroke-width="1.2"/><circle cx="10" cy="5" r="1.5" fill="#D02020"/></svg>
<svg class="a" style="left:803px;top:635px" width="12.0" height="12.0" viewBox="0 0 12 12"><path d="M1,11q6,-2 9-9" stroke="#333" fill="none" stroke-width="1.2"/><circle cx="9" cy="10" r="1.5" fill="#D02020"/></svg>
<svg class="a" style="left:820px;top:635px" width="12.0" height="12.0" viewBox="0 0 12 12"><path d="M1,11l3-8h7v8z" stroke="#333" fill="none" stroke-width="1.2"/><circle cx="10" cy="10" r="1.5" fill="#D02020"/></svg>
<svg class="a" style="left:836px;top:635px" width="12.0" height="12.0" viewBox="0 0 12 12"><path d="M1,11q8,0 9-9" stroke="#333" fill="none" stroke-width="1.2"/><circle cx="2" cy="9" r="1.3" fill="#D02020"/></svg>
<svg class="a" style="left:853px;top:635px" width="12.0" height="12.0" viewBox="0 0 12 12"><path d="M0.5,6.5h11v4h-11z" fill="#E0D040" stroke="#333"/><circle cx="2" cy="2" r="1.2" fill="#D02020"/></svg>
<svg class="a" style="left:870px;top:635px" width="12.0" height="12.0" viewBox="0 0 12 12"><rect x="4.5" y="3.5" width="6" height="8" rx="2" fill="#F0F0C0" stroke="#333"/><circle cx="2" cy="2" r="1.2" fill="#D02020"/></svg>
<div class="a" style="left:116px;top:668px;width:767px;height:14px;background:#fff;border-top:2px solid #404040;border-left:2px solid #404040;border-bottom:1px solid #ECE9D8"></div>
<div class="a t" style="left:119px;top:669.5px;font-size:8.5px">Befehl &gt;</div>
<div class="a" style="left:888px;top:75px;width:72px;height:12px;background:#7B9BE1"></div>
<div class="a t" style="left:891px;top:76px;font-size:8.5px;color:#DDE6FA">Eigensc...</div>
<svg class="a" style="left:935px;top:77px" width="8" height="9" viewBox="0 0 8 9"><path d="M2,1h4v4h-4zM1,5h6M4,5v3" stroke="#fff" fill="none" stroke-width="1.2"/></svg>
<svg class="a" style="left:947px;top:77px" width="9" height="9" viewBox="0 0 9 9"><path d="M1.5,1.5l6,6M7.5,1.5l-6,6" stroke="#fff" stroke-width="1.4"/></svg>
<div class="a" style="left:889px;top:91px;width:12px;height:14px;background:#C8D8F8;border:1px solid #6A8AD0"></div>
<svg class="a" style="left:890px;top:94px" width="10" height="9" viewBox="0 0 10 9"><path d="M1,6l3-1l5-4" stroke="#2030A0" stroke-width="1.2"/></svg>
<svg class="a" style="left:905px;top:91px" width="12" height="13" viewBox="0 0 12 13"><path d="M0.5,1l3,10h2l3-10M6,5h5v6h-5z" fill="none" stroke="#111" stroke-width="1.3"/></svg>
<svg class="a" style="left:921px;top:91px" width="13" height="13" viewBox="0 0 13 13"><path d="M0.5,1l3.5,10l4-10" fill="none" stroke="#111" stroke-width="1.3"/><circle cx="10" cy="9" r="2.5" fill="#F0E020"/></svg>
<svg class="a" style="left:941px;top:91px" width="9" height="13" viewBox="0 0 9 13"><path d="M7,1l-5,10l1,1l5-10z" fill="#E4E2D8" stroke="#A8A69A"/></svg>
<svg class="a" style="left:920px;top:108px" width="13" height="11" viewBox="0 0 13 11"><ellipse cx="6.5" cy="5.5" rx="6" ry="5" fill="#E070C0"/><path d="M6.5,5.5L12,3A6,5 0 0 0 6.5,0.5z" fill="#60C0F0"/><path d="M6.5,5.5L1,8A6,5 0 0 0 6.5,10.5z" fill="#F0E040"/><path d="M6.5,5.5L12,5A6,5 0 0 1 9,10z" fill="#70D070"/></svg>
<svg class="a" style="left:937px;top:108px" width="14" height="11" viewBox="0 0 14 11"><path d="M1,8q1-4 5-4q2-3 5-1q3,0 2,5z" fill="#80C8D8"/><path d="M4,2l6,7M10,2l-6,7" stroke="#C06060" stroke-width="1.2"/></svg>
<div class="a" style="left:888px;top:123px;width:71px;height:561px;background:#fff;border:1px solid #6A6A60;border-top:2px solid #333;border-left:1.5px solid #404040"></div>
<div class="a" style="left:890px;top:135.5px;width:68px;height:1px;background:#E0DED4"></div>
<div class="a" style="left:890px;top:124.5px;width:52px;height:11px;background:#6A8BDA;border:1px solid #2A3A70"></div>
<div class="a t" style="left:893px;top:125.5px;font-size:8px;color:#E8EEFF">Lizenzname</div>
<div class="a t" style="left:946px;top:126.0px;font-size:8px;color:#A8A8A8">D.</div>
<div class="a" style="left:890px;top:147.5px;width:68px;height:1px;background:#E0DED4"></div>
<div class="a t" style="left:893px;top:138.0px;font-size:8px;color:#000">Staatsnorm</div>
<div class="a t" style="left:946px;top:138.0px;font-size:8px;color:#A8A8A8">D.</div>
<div class="a" style="left:890px;top:159.5px;width:68px;height:1px;background:#E0DED4"></div>
<div class="a t" style="left:893px;top:150.0px;font-size:8px;color:#000">Struktur</div>
<div class="a t" style="left:946px;top:150.0px;font-size:8px;color:#A8A8A8">A.</div>
<div class="a" style="left:890px;top:171.5px;width:68px;height:1px;background:#E0DED4"></div>
<div class="a t" style="left:893px;top:162.0px;font-size:8px;color:#000">Niveau</div>
<div class="a t" style="left:946px;top:162.0px;font-size:8px;color:#A8A8A8">E.</div>
<div class="a" style="left:890px;top:183.5px;width:68px;height:1px;background:#E0DED4"></div>
<div class="a t" style="left:893px;top:174.0px;font-size:8px;color:#000">Anzahl Kno...</div>
<div class="a t" style="left:946px;top:174.0px;font-size:8px;color:#A8A8A8">6.</div>
<div class="a" style="left:890px;top:195.5px;width:68px;height:1px;background:#E0DED4"></div>
<div class="a t" style="left:893px;top:186.0px;font-size:8px;color:#000">Anzahl Stä...</div>
<div class="a t" style="left:946px;top:186.0px;font-size:8px;color:#A8A8A8">4.</div>
<div class="a" style="left:890px;top:207.5px;width:68px;height:1px;background:#E0DED4"></div>
<div class="a t" style="left:893px;top:198.0px;font-size:8px;color:#000">Anzahl 2D-...</div>
<div class="a t" style="left:946px;top:198.0px;font-size:8px;color:#A8A8A8">0</div>
<div class="a" style="left:890px;top:219.5px;width:68px;height:1px;background:#E0DED4"></div>
<div class="a t" style="left:893px;top:210.0px;font-size:8px;color:#000">Anzahl Kör...</div>
<div class="a t" style="left:946px;top:210.0px;font-size:8px;color:#A8A8A8">1</div>
<div class="a" style="left:890px;top:231.5px;width:68px;height:1px;background:#E0DED4"></div>
<div class="a t" style="left:893px;top:222.0px;font-size:8px;color:#000">Anzahl ver...</div>
<div class="a t" style="left:946px;top:222.0px;font-size:8px;color:#A8A8A8">26</div>
<div class="a" style="left:890px;top:243.5px;width:68px;height:1px;background:#E0DED4"></div>
<div class="a t" style="left:893px;top:234.0px;font-size:8px;color:#000">Anzahl Las...</div>
<div class="a t" style="left:946px;top:234.0px;font-size:8px;color:#A8A8A8">3</div>
<div class="a" style="left:890px;top:255.5px;width:68px;height:1px;background:#E0DED4"></div>
<div class="a t" style="left:893px;top:246.0px;font-size:8px;color:#000">Anzahl Mat...</div>
<div class="a t" style="left:946px;top:246.0px;font-size:8px;color:#A8A8A8">4</div>
<div class="a" style="left:890px;top:267.5px;width:68px;height:1px;background:#E0DED4"></div>
<div class="a t" style="left:893px;top:258.0px;font-size:8px;color:#000">Lineare An...</div>
<div class="a t" style="left:946px;top:258.0px;font-size:8px;color:#A8A8A8">F.</div>
<div class="a" style="left:890px;top:279.5px;width:68px;height:1px;background:#E0DED4"></div>
<div class="a t" style="left:893px;top:270.0px;font-size:8px;color:#000">Nichtlinear...</div>
<div class="a t" style="left:946px;top:270.0px;font-size:8px;color:#A8A8A8">F.</div>
<div class="a" style="left:942.5px;top:124px;width:1px;height:156px;background:#D8D6CC"></div>
<div class="a" style="left:0px;top:684px;width:960px;height:14px;background:#ECE9D8"></div>
<div class="a" style="left:1px;top:685px;width:96px;height:12px;border-right:1px solid #C8C5B2;border-left:1px solid #fff"></div>
<div class="a" style="left:99px;top:685px;width:95px;height:12px;border-right:1px solid #C8C5B2;border-left:1px solid #fff"></div>
<div class="a" style="left:196px;top:685px;width:28px;height:12px;border-right:1px solid #C8C5B2;border-left:1px solid #fff"></div>
<div class="a" style="left:226px;top:685px;width:46px;height:12px;border-right:1px solid #C8C5B2;border-left:1px solid #fff"></div>
<div class="a" style="left:274px;top:685px;width:476px;height:12px;border-right:1px solid #C8C5B2;border-left:1px solid #fff"></div>
<div class="a" style="left:752px;top:685px;width:61px;height:12px;border-right:1px solid #C8C5B2;border-left:1px solid #fff"></div>
<div class="a" style="left:815px;top:685px;width:69px;height:12px;border-right:1px solid #C8C5B2;border-left:1px solid #fff"></div>
<div class="a" style="left:887px;top:685px;width:57px;height:12px;border-right:1px solid #C8C5B2;border-left:1px solid #fff"></div>
<div class="a t" style="left:203px;top:687px;font-size:8px">m</div>
<div class="a t" style="left:234px;top:687px;font-size:8px">Ebene XY</div>
<div class="a t" style="left:283px;top:687px;font-size:8px">Bereit</div>
<div class="a t" style="left:760px;top:687px;font-size:8px">Fangmodus</div>
<div class="a t" style="left:822px;top:687px;font-size:8px;color:#A8A8A0">Filter aus</div>
<div class="a t" style="left:893px;top:687px;font-size:8px">Aktuelles BKS</div>
<div class="a" style="left:945px;top:687px;width:15px;height:3px;background:#111"></div>
<div class="a" style="left:945px;top:690px;width:15px;height:3px;background:#E00000"></div>
<div class="a" style="left:945px;top:693px;width:15px;height:3px;background:#FFCC00"></div>
<div class="a" style="left:0px;top:698px;width:960px;height:22px;background:linear-gradient(#3A78E8 0,#5A98F0 1px,#2A64DA 3px,#2660D8 10px,#2458D0 18px,#1E4CBA 22px)"></div>
<div class="a" style="left:0px;top:698px;width:80px;height:22px;background:linear-gradient(#3C9A3C 0,#5CC05C 2px,#3AA23A 6px,#2F8E2F 16px,#2A802A 22px);border-radius:0 9px 9px 0"></div>
<svg class="a" style="left:9px;top:702px" width="15" height="14" viewBox="0 0 15 14"><path d="M1,2q3-1 6,0v5q-3-1-6,0z" fill="#F04020"/><path d="M8,2q3,1 6,0v5q-3,1-6,0z" fill="#40B040"/><path d="M1,8q3-1 6,0v5q-3-1-6,0z" fill="#3070F0"/><path d="M8,8q3,1 6,0v5q-3,1-6,0z" fill="#F0C020"/></svg>
<div class="a t" style="left:28px;top:701px;font-size:14px;font-style:italic;font-weight:bold;color:#fff;text-shadow:1px 1px 1px #1A4A1A">Start</div>
<div class="a" style="left:86px;top:700px;width:119px;height:19px;background:linear-gradient(#1A46AC,#1E52C0 30%,#1E4CB4);border-radius:2px;border:1px solid #143890"></div>
<svg class="a" style="left:94px;top:703px" width="13" height="13" viewBox="0 0 14 14"><path d="M2,1l5,12" stroke="#E83020" stroke-width="2.5"/><path d="M4,2h9l-2,3h-5" fill="#F0B020"/><path d="M1,5l6,7" stroke="#30A040" stroke-width="2"/></svg>
<div class="a t" style="left:110px;top:705.5px;font-size:9px;color:#fff">Scia Engineer - [B...</div>
<div class="a" style="left:208px;top:700px;width:116px;height:19px;background:linear-gradient(#5A9AF8,#3C82F0 20%,#3A7CEC 80%,#306CD8);border-radius:2px;border:1px solid #6AA4F8"></div>
<svg class="a" style="left:214px;top:702px" width="15" height="15" viewBox="0 0 15 15"><path d="M2,2l6,6l5-3l-3,8" stroke="#F0C020" stroke-width="3" fill="none"/></svg>
<div class="a t" style="left:232px;top:705.5px;font-size:9px;color:#fff">office wörterbuch ...</div>
<div class="a" style="left:327px;top:700px;width:117px;height:19px;background:linear-gradient(#5A9AF8,#3C82F0 20%,#3A7CEC 80%,#306CD8);border-radius:2px;border:1px solid #6AA4F8"></div>
<svg class="a" style="left:333px;top:702px" width="15" height="15" viewBox="0 0 15 15"><path d="M2,12l9-10l3,3l-9,9z" fill="#F0A040" stroke="#804010"/></svg>
<div class="a t" style="left:351px;top:705.5px;font-size:9px;color:#fff">15. Al Di Meola - O...</div>
<div class="a" style="left:891px;top:698px;width:69px;height:22px;background:linear-gradient(#3AA0F8 0,#1C8CF0 3px,#1590EE 12px,#1080E0 22px);border-left:1px solid #0A60C0"></div>
<div class="a t" style="left:870px;top:705px;font-size:8.5px;color:#fff">DE</div>
<div class="a" style="left:893px;top:702px;width:12px;height:12px;background:radial-gradient(circle at 40% 40%,#B0D8FF,#3A8AE8);border-radius:50%;border:1px solid #fff"></div>
<svg class="a" style="left:896px;top:705px" width="6" height="7" viewBox="0 0 6 7"><path d="M4.5,0.5l-3,3l3,3" stroke="#fff" stroke-width="1.5" fill="none"/></svg>
<div class="a" style="left:906px;top:702px;width:14px;height:14px;background:#fff;border:1px solid #ddd"></div>
<svg class="a" style="left:908px;top:704px" width="10" height="10" viewBox="0 0 10 10"><path d="M0,0h10v10h-10z" fill="#E01010"/><path d="M2,5l5-3v6z" fill="#fff"/></svg>
<div class="a t" style="left:926px;top:705px;font-size:9px;color:#fff">14:39</div>
</body></html>
